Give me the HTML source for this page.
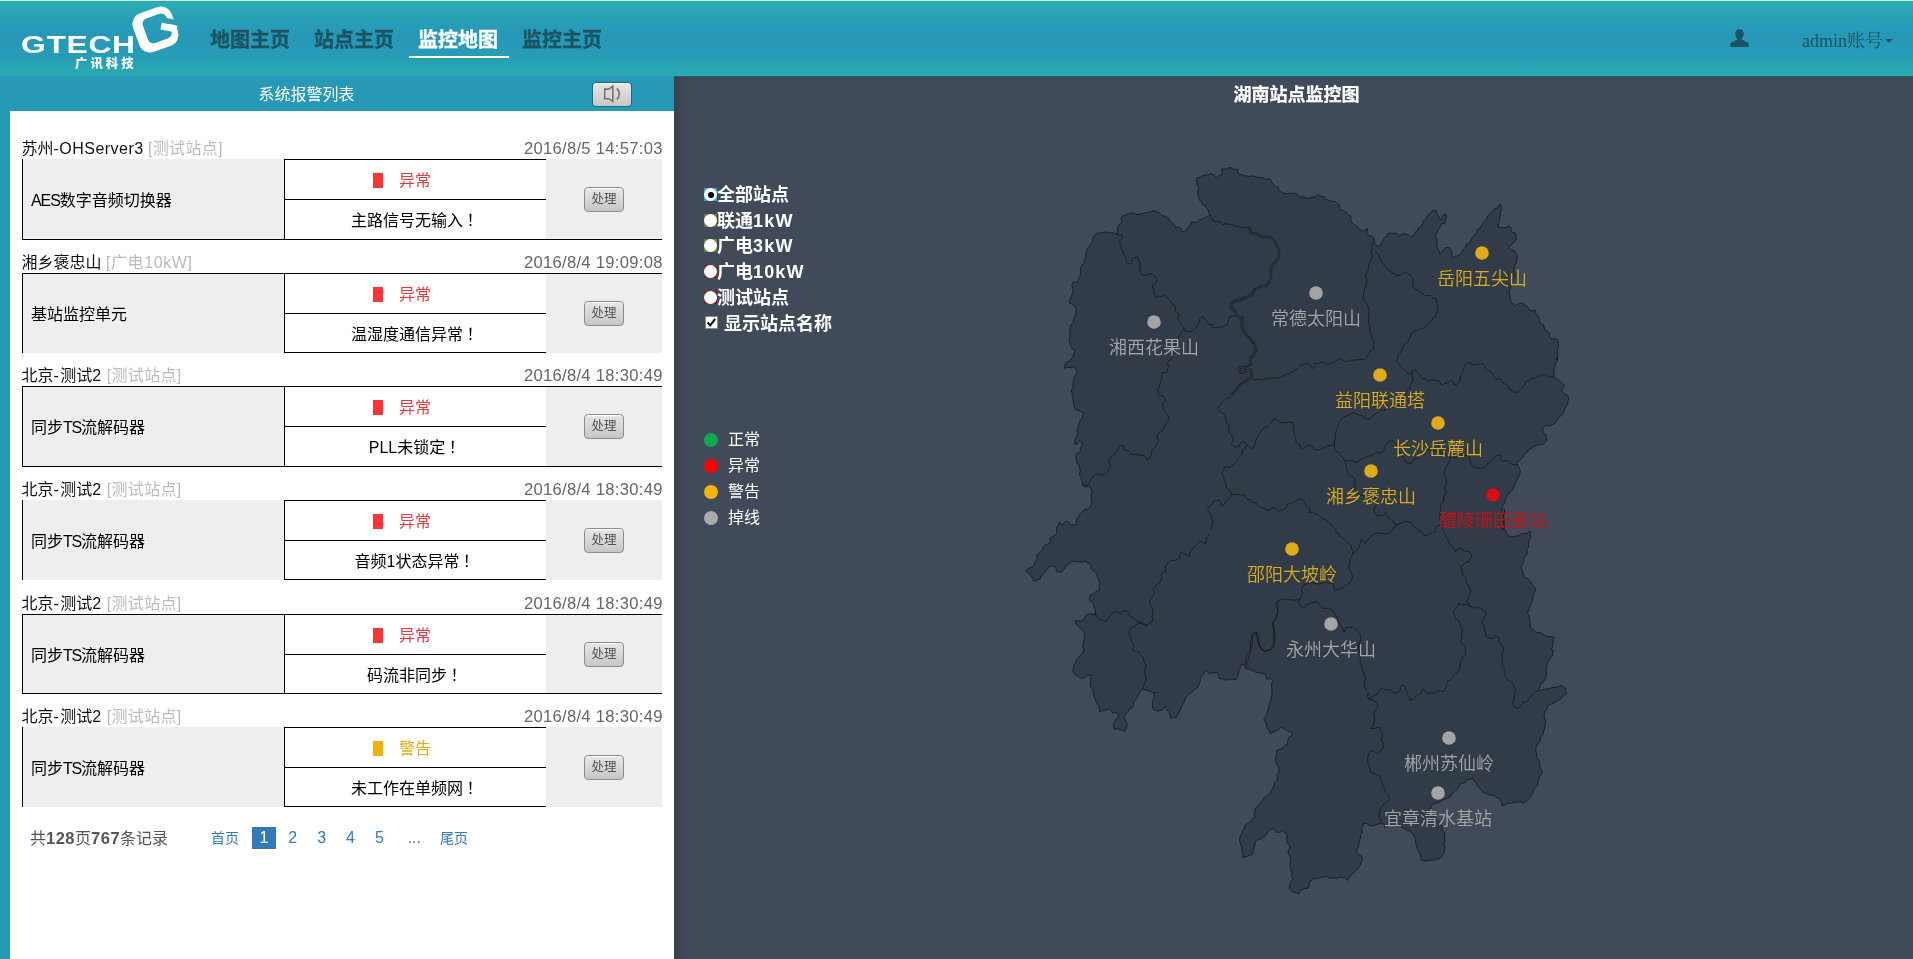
<!DOCTYPE html>
<html lang="zh-CN">
<head>
<meta charset="utf-8">
<title>湖南站点监控图</title>
<style>
*{box-sizing:border-box;margin:0;padding:0}
html,body{width:1913px;height:959px;overflow:hidden;background:#404a59}
body{position:relative;font-family:"Liberation Sans","Noto Sans CJK SC",sans-serif;font-size:16px;color:#000}
#hdr,#left,#right,#hdr *,#left *,#right *{position:absolute}
#hdr,#left,#right{will-change:transform}
#hdr{left:0;top:0;width:1913px;height:76px;background:linear-gradient(180deg,#2cb8aa 0%,#2aadb0 6%,#299fb5 22%,#2798b8 45%,#279bb7 70%,#28a6b3 92%,#29aab2 100%)}
#hdr .nav{top:25.3px;height:30px;width:100px;text-align:center;font-weight:bold;font-size:20px;line-height:30px;color:#1a5462;white-space:nowrap;-webkit-text-stroke:0.35px currentColor}
#hdr .nav.on{color:#fff}
#hdr .ul{left:409px;top:56px;width:100px;height:2px;background:#fff}
#hdr .user{left:1802px;top:28px;height:26px;line-height:26px;font-family:"Liberation Serif","Noto Serif CJK SC",serif;font-size:18px;color:#1a5462;white-space:nowrap}
#hdr .caret{left:1885px;top:39px;width:0;height:0;border-left:4px solid transparent;border-right:4px solid transparent;border-top:4px solid #1a5462}
#left{left:0;top:76px;width:674px;height:883px;background:#2799b6}
#left .white{left:10px;top:35px;width:664px;height:848px;background:#fff}
#left .ttl{left:258.5px;top:7.4px;height:24px;line-height:24px;font-size:16px;color:#fff;white-space:nowrap}
.btn{background:linear-gradient(180deg,#efefef 0%,#e2e2e2 12%,#d6d6d6 55%,#c6c6c6 100%);border:1px solid #8c8c8c;border-radius:4px;color:#555;font-size:12.5px;text-align:center;white-space:nowrap;box-shadow:inset 0 1px 0 rgba(255,255,255,.75)}
#left .item{left:22px;width:640px;height:100px}
#left .nm{left:-0.5px;top:1.5px;height:22px;line-height:22px;font-size:16px;white-space:nowrap;color:#111}
#left .nm i{position:static;font-style:normal;color:#bbb}
#left .dt{right:-0.8px;top:2.2px;height:22px;line-height:22px;font-size:16.6px;letter-spacing:0.3px;white-space:nowrap;color:#666;text-align:right}
#left .g1{left:0;width:262px;background:#eee}
#left .g2{left:524px;width:116px;background:#eee}
#left .ln{background:#000}
#left .dev{left:9px;height:24px;line-height:24px;font-size:16px;white-space:nowrap;color:#000}
#left .st{left:377px;height:24px;line-height:24px;font-size:16px;white-space:nowrap}
#left .msg{left:262px;width:262px;text-align:center;height:24px;line-height:24px;font-size:16px;white-space:nowrap;color:#000}
#left .sq{width:10px;height:15px}
#left .pg{top:750px;height:24px;line-height:24px;white-space:nowrap;color:#337ab7;font-size:16px}
#right{left:674px;top:76px;width:1239px;height:883px;background:#404a59}
#right .sh{left:0;top:0;width:13px;height:883px;background:linear-gradient(90deg,rgba(0,0,0,.13),rgba(0,0,0,0))}
#right .mt{-webkit-text-stroke:0.25px #fff;left:0;top:6.6px;width:1245px;text-align:center;height:24px;line-height:24px;font-size:18px;font-weight:bold;color:#fff;white-space:nowrap}
#right .rl{left:43px;height:26px;line-height:26px;font-size:18px;font-weight:bold;color:#fff;white-space:nowrap}
#right .rb{left:30px;width:13px;height:13px}
#right .rb b{left:0;top:0;width:13px;height:13px;border-radius:50%;background:#fff}
#right .lg{left:54px;height:24px;line-height:24px;font-size:16px;color:#fff;white-space:nowrap}
#right .ld{left:30px;width:14px;height:14px;border-radius:50%}
#map{left:0;top:0;width:1239px;height:883px}
#map text{font-family:"Liberation Sans","Noto Sans CJK SC",sans-serif;font-size:18px;font-weight:350;text-anchor:middle}
</style>
</head>
<body>
<div id="hdr">
<div style="left:0;top:0;width:1913px;height:1px;background:#c4f0f0"></div><div style="left:0;top:1px;width:1913px;height:1px;background:rgba(60,110,110,.28)"></div>
<div class="lg-t" style="left:21px;top:32.3px;height:26px;line-height:26px;font-size:23.4px;font-weight:bold;color:#fff;white-space:nowrap;transform-origin:0 50%;transform:scaleX(1.36);letter-spacing:0.5px">GTECH</div>
<div class="lg-c" style="left:75px;top:54.8px;height:18px;line-height:18px;font-size:12.4px;font-weight:900;color:#fff;white-space:nowrap;letter-spacing:3px">广讯科技</div>
<div class="lg-g" style="left:125px;top:0.6px;width:60px;height:60px;clip-path:polygon(0 0,60px 0,60px 20.9px,37.5px 16.65px,37.5px 22.2px,60px 26.4px,60px 60px,0 60px)">
  <div style="left:10.2px;top:8.3px;width:41px;height:41px;border-radius:11.5px;overflow:hidden;transform:rotate(-20deg)"><div style="left:10.3px;top:7.1px;width:25.1px;height:25.5px;border-radius:5.5px;box-shadow:0 0 0 30px #fff"></div></div>
  <div style="left:36px;top:23.4px;width:15.5px;height:7.2px;background:#fff;transform:rotate(11.5deg)"></div>
</div>

<div class="nav" style="left:200px">地图主页</div>
<div class="nav" style="left:304px">站点主页</div>
<div class="nav on" style="left:408px">监控地图</div>
<div class="nav" style="left:512px">监控主页</div>
<div class="ul"></div>
<svg style="left:1730px;top:29px" width="19" height="18" viewBox="0 0 19 18"><path d="M9.5 0.3c2.6 0 4.3 1.9 4.3 4.6 0 1.7-.7 3.4-1.8 4.4-.3.3-.3 1.2.2 1.5l4.6 2.1c1.2.6 1.9 1.4 1.9 2.6V18H.3v-2.5c0-1.2.7-2 1.9-2.6l4.6-2.1c.5-.3.5-1.2.2-1.5C5.900 8.300 5.200 6.600 5.200 4.900 5.200 2.200 6.900.3 9.500.3z" fill="#1a5462"/></svg>
<div class="user">admin账号</div><div class="caret"></div>
</div>
<div id="left">
<div class="ttl">系统报警列表</div>
<div class="btn" style="left:592px;top:6.3px;width:40px;height:24.3px;border-color:#1d6b80"></div>
<svg style="left:600px;top:8px" width="26" height="20" viewBox="600 84 26 20"><path d="M604.7 89.1H608.6L612.8 86.3V101.5L608.6 98.7H604.7Z" fill="none" stroke="#747474" stroke-width="1.6" stroke-linejoin="miter"/><path d="M616.9 88.4Q621.6 94 616.9 99.6" fill="none" stroke="#747474" stroke-width="1.7"/></svg>
<div class="white"></div>
<div class="item" style="top:60px;height:104px">
<div class="nm">苏州<span style="position:static;letter-spacing:0.47px">-OHServer3</span> <i><span style="position:static;letter-spacing:0.3px">[测试站点]</span></i></div><div class="dt">2016/8/5 14:57:03</div>
<div class="g1" style="top:23px;height:81px"></div>
<div class="g2" style="top:23px;height:81px"></div>
<div class="a" style="left:262px;top:23px;width:262px;height:81px;background:#fff"></div>
<div class="ln" style="left:0;top:23px;width:1px;height:81px"></div>
<div class="ln" style="left:262px;top:23px;width:1px;height:81px"></div>
<div class="ln" style="left:262px;top:23px;width:262px;height:1px"></div>
<div class="ln" style="left:0;top:103px;width:640px;height:1px"></div>
<div class="ln" style="left:262px;top:63px;width:262px;height:1px"></div>
<div class="dev" style="top:52.8px"><span style="position:static;letter-spacing:-1.1px">AES</span>数字音频切换器</div>
<div class="sq" style="left:351px;top:36.5px;background:#fb3535"></div>
<div class="st" style="top:33.3px;color:#e8383d">异常</div>
<div class="msg" style="top:73px">主路信号无输入<span style="position:relative;left:3.4px">！</span></div>
<div class="btn" style="left:562px;top:51px;width:40px;height:25px;line-height:22.5px">处理</div>
</div>
<div class="item" style="top:174px;height:103px">
<div class="nm">湘乡褒忠山 <i><span style="position:static;letter-spacing:0.6px">[广电10kW]</span></i></div><div class="dt">2016/8/4 19:09:08</div>
<div class="g1" style="top:23px;height:80px"></div>
<div class="g2" style="top:24px;height:79px"></div>
<div class="a" style="left:262px;top:23px;width:262px;height:80px;background:#fff"></div>
<div class="ln" style="left:0;top:23px;width:1px;height:80px"></div>
<div class="ln" style="left:262px;top:23px;width:1px;height:80px"></div>
<div class="ln" style="left:0;top:23px;width:640px;height:1px"></div>
<div class="ln" style="left:262px;top:102px;width:262px;height:1px"></div>
<div class="ln" style="left:262px;top:63px;width:262px;height:1px"></div>
<div class="dev" style="top:52.8px">基站监控单元</div>
<div class="sq" style="left:351px;top:36.5px;background:#fb3535"></div>
<div class="st" style="top:33.3px;color:#e8383d">异常</div>
<div class="msg" style="top:73px">温湿度通信异常<span style="position:relative;left:3.4px">！</span></div>
<div class="btn" style="left:562px;top:51px;width:40px;height:25px;line-height:22.5px">处理</div>
</div>
<div class="item" style="top:287px;height:104px">
<div class="nm">北京<span style="position:static;letter-spacing:1.3px">-</span>测试<span style="position:static;letter-spacing:1.3px">2</span> <i><span style="position:static;letter-spacing:0.3px">[测试站点]</span></i></div><div class="dt">2016/8/4 18:30:49</div>
<div class="g1" style="top:23px;height:81px"></div>
<div class="g2" style="top:24px;height:80px"></div>
<div class="a" style="left:262px;top:23px;width:262px;height:81px;background:#fff"></div>
<div class="ln" style="left:0;top:23px;width:1px;height:81px"></div>
<div class="ln" style="left:262px;top:23px;width:1px;height:81px"></div>
<div class="ln" style="left:0;top:23px;width:640px;height:1px"></div>
<div class="ln" style="left:0;top:103px;width:640px;height:1px"></div>
<div class="ln" style="left:262px;top:63px;width:262px;height:1px"></div>
<div class="dev" style="top:52.8px">同步<span style="position:static;letter-spacing:-1.2px">TS</span>流解码器</div>
<div class="sq" style="left:351px;top:36.5px;background:#fb3535"></div>
<div class="st" style="top:33.3px;color:#e8383d">异常</div>
<div class="msg" style="top:73px">PLL未锁定<span style="position:relative;left:3.4px">！</span></div>
<div class="btn" style="left:562px;top:51px;width:40px;height:25px;line-height:22.5px">处理</div>
</div>
<div class="item" style="top:401px;height:103px">
<div class="nm">北京<span style="position:static;letter-spacing:1.3px">-</span>测试<span style="position:static;letter-spacing:1.3px">2</span> <i><span style="position:static;letter-spacing:0.3px">[测试站点]</span></i></div><div class="dt">2016/8/4 18:30:49</div>
<div class="g1" style="top:23px;height:80px"></div>
<div class="g2" style="top:23px;height:80px"></div>
<div class="a" style="left:262px;top:23px;width:262px;height:80px;background:#fff"></div>
<div class="ln" style="left:0;top:23px;width:1px;height:80px"></div>
<div class="ln" style="left:262px;top:23px;width:1px;height:80px"></div>
<div class="ln" style="left:262px;top:23px;width:262px;height:1px"></div>
<div class="ln" style="left:262px;top:102px;width:262px;height:1px"></div>
<div class="ln" style="left:262px;top:63px;width:262px;height:1px"></div>
<div class="dev" style="top:52.8px">同步<span style="position:static;letter-spacing:-1.2px">TS</span>流解码器</div>
<div class="sq" style="left:351px;top:36.5px;background:#fb3535"></div>
<div class="st" style="top:33.3px;color:#e8383d">异常</div>
<div class="msg" style="top:73px">音频1状态异常<span style="position:relative;left:3.4px">！</span></div>
<div class="btn" style="left:562px;top:51px;width:40px;height:25px;line-height:22.5px">处理</div>
</div>
<div class="item" style="top:515px;height:103px">
<div class="nm">北京<span style="position:static;letter-spacing:1.3px">-</span>测试<span style="position:static;letter-spacing:1.3px">2</span> <i><span style="position:static;letter-spacing:0.3px">[测试站点]</span></i></div><div class="dt">2016/8/4 18:30:49</div>
<div class="g1" style="top:23px;height:80px"></div>
<div class="g2" style="top:24px;height:79px"></div>
<div class="a" style="left:262px;top:23px;width:262px;height:80px;background:#fff"></div>
<div class="ln" style="left:0;top:23px;width:1px;height:80px"></div>
<div class="ln" style="left:262px;top:23px;width:1px;height:80px"></div>
<div class="ln" style="left:0;top:23px;width:640px;height:1px"></div>
<div class="ln" style="left:0;top:102px;width:640px;height:1px"></div>
<div class="ln" style="left:262px;top:63px;width:262px;height:1px"></div>
<div class="dev" style="top:52.8px">同步<span style="position:static;letter-spacing:-1.2px">TS</span>流解码器</div>
<div class="sq" style="left:351px;top:36.5px;background:#fb3535"></div>
<div class="st" style="top:33.3px;color:#e8383d">异常</div>
<div class="msg" style="top:73px">码流非同步<span style="position:relative;left:3.4px">！</span></div>
<div class="btn" style="left:562px;top:51px;width:40px;height:25px;line-height:22.5px">处理</div>
</div>
<div class="item" style="top:628px;height:103px">
<div class="nm">北京<span style="position:static;letter-spacing:1.3px">-</span>测试<span style="position:static;letter-spacing:1.3px">2</span> <i><span style="position:static;letter-spacing:0.3px">[测试站点]</span></i></div><div class="dt">2016/8/4 18:30:49</div>
<div class="g1" style="top:23px;height:80px"></div>
<div class="g2" style="top:23px;height:80px"></div>
<div class="a" style="left:262px;top:23px;width:262px;height:80px;background:#fff"></div>
<div class="ln" style="left:0;top:23px;width:1px;height:80px"></div>
<div class="ln" style="left:262px;top:23px;width:1px;height:80px"></div>
<div class="ln" style="left:262px;top:23px;width:262px;height:1px"></div>
<div class="ln" style="left:262px;top:102px;width:262px;height:1px"></div>
<div class="ln" style="left:262px;top:63px;width:262px;height:1px"></div>
<div class="dev" style="top:52.8px">同步<span style="position:static;letter-spacing:-1.2px">TS</span>流解码器</div>
<div class="sq" style="left:351px;top:36.5px;background:#f0b20c"></div>
<div class="st" style="top:33.3px;color:#e2ae12">警告</div>
<div class="msg" style="top:73px">未工作在单频网<span style="position:relative;left:3.4px">！</span></div>
<div class="btn" style="left:562px;top:51px;width:40px;height:25px;line-height:22.5px">处理</div>
</div>
<div class="pg" style="left:30px;color:#555">共<b style="position:static;letter-spacing:0.5px;font-size:16.5px">128</b>页<b style="position:static;letter-spacing:0.5px;font-size:16.5px">767</b>条记录</div>
<div class="pg" style="left:211px;font-size:14px">首页</div>
<div class="pg" style="left:252px;top:751px;width:24px;height:22px;line-height:22px;background:#337ab7;color:#fff;text-align:center">1</div>
<div class="pg" style="left:280.8px;width:24px;text-align:center">2</div>
<div class="pg" style="left:309.7px;width:24px;text-align:center">3</div>
<div class="pg" style="left:338.5px;width:24px;text-align:center">4</div>
<div class="pg" style="left:367.4px;width:24px;text-align:center">5</div>
<div class="pg" style="left:402.3px;width:24px;text-align:center">...</div>
<div class="pg" style="left:440px;font-size:14px">尾页</div>
</div>
<div id="right">
<svg id="map" width="1239" height="883" viewBox="674 76 1239 883">
<path d="M1095.5,700 1094.4,697.4 1093.4,694.8 1093.4,691.9 1092.7,689 1090.5,686.6 1090.3,683.5 1090.7,680.7 1090.7,677.9 1091.3,675.2 1087.2,675.2 1084.5,677.6 1080.9,678.3 1078.8,676.7 1076.7,675.2 1073.9,673.2 1072.6,670 1073.5,667.5 1073.8,664.8 1075.7,662.7 1076.3,659.8 1078.4,657.8 1079.9,655.4 1082.5,653.2 1084,650.2 1082.7,647.2 1083,643.9 1083.5,640.6 1085.1,637.6 1084.3,634.7 1083.9,631.7 1081.9,629.3 1079.4,627.1 1076.7,625.1 1074.7,621 1077.8,620.8 1080.9,621 1083.7,619.6 1085.1,616.8 1087.2,614.4 1090.3,613.7 1092.9,614.5 1095.5,613.7 1096.5,616.8 1095.7,614.4 1095.1,612 1095.5,609.5 1093.7,607.2 1093.4,604.3 1091,602 1089.2,599.1 1090.3,594.9 1093.3,593.9 1095.5,591.8 1099.7,589.7 1099,586.5 1099.7,583.4 1098.8,580.2 1097.6,577.2 1096.8,574.4 1095.5,571.9 1093.2,570.6 1091.3,568.8 1090.9,566.2 1090.3,563.6 1087.3,563.1 1085.1,560.9 1082,562.2 1078.8,561.5 1076.4,562.1 1073.9,561.1 1071.5,561.5 1069,563.7 1066.3,565.7 1065.2,568 1063.3,569.7 1062.1,571.9 1059.5,572 1056.9,571.9 1056,569.4 1055.9,566.7 1051.7,565.7 1049.2,566.9 1047.3,568.8 1045.5,570.9 1043.8,573.4 1041.3,575.1 1040.2,579.2 1037.1,579.9 1034,580.9 1032.5,578.5 1030.9,576.1 1029.7,573.8 1027.7,572.3 1025.6,570.9 1027.4,569 1029.8,567.8 1032.5,567.1 1034,564.7 1034.9,562.1 1037.1,560.5 1036.9,557.4 1037.1,554.2 1040.1,552.6 1042.3,550.1 1043.2,547.1 1045.5,544.8 1048.1,543.8 1050.7,542.8 1049.7,540.1 1050.7,537.5 1053.5,536.3 1055.9,534.4 1056.8,532 1056.7,529.6 1056.9,527.1 1058.7,524.8 1059,521.9 1062.1,525 1064.5,522.6 1067.4,520.9 1069.1,523.3 1071.5,525 1075.7,525 1076.4,521.9 1076.7,518.8 1078.7,516.3 1080.5,513.5 1082.5,511.4 1084.7,509.4 1087.6,509 1089.9,507.3 1091.8,504.4 1091.9,501 1091.3,497.9 1090.9,494.8 1091.9,490.6 1090.6,488.3 1088.8,486.4 1085.5,486.9 1082.6,485.4 1082.5,482.7 1081.5,480.2 1080.8,476.9 1079.4,473.9 1080.5,470.8 1079.4,467.6 1079,464.9 1076.9,462.9 1076.3,460.3 1076,457.2 1076.3,454.1 1078.6,452.8 1080.5,451 1080.2,448.3 1081.8,446.1 1082.6,443.7 1079.4,440.5 1077.9,443.1 1075.3,444.7 1074.8,441.8 1075,439.1 1076.3,436.4 1077.6,433.7 1076.9,430.6 1078.4,428 1078.6,425.1 1079.6,422.4 1080.5,419.7 1082.6,418.1 1082.5,415 1084.7,413.4 1080.5,411.3 1077.9,410.4 1075.3,409.2 1074.4,406.1 1073.2,403 1073.5,399.7 1072.1,396.7 1072.3,393.5 1071.1,390.5 1072.9,387.6 1073.2,384.2 1073.2,381 1074.2,378 1075.6,375.3 1077.4,372.8 1076.1,370.3 1075.3,367.5 1072.7,366.7 1070.1,367.5 1067.2,367.1 1064.8,368.6 1064.8,364.4 1067.1,362.2 1070.1,361.3 1071.1,358.8 1073.2,357.1 1073.7,353.8 1075.3,350.9 1072.8,349.2 1071.1,346.7 1070,343.6 1069,340.4 1069.7,337.3 1070.1,334.2 1069.6,330 1070.3,327.3 1071,324.7 1073.2,322.7 1073.8,320 1074.5,317.4 1075.7,314.9 1076.3,312.2 1076.4,308.8 1074.6,306 1072,304.1 1069,302.9 1070.1,299.8 1071.1,296.6 1072,294.2 1072.9,291.8 1073.2,289.3 1071.7,285.1 1072.9,282.6 1076.2,282.1 1077.9,280.1 1079.4,277.8 1080.6,274.8 1080.8,271.6 1080.5,268.4 1081.7,266.2 1083.1,264.1 1084.7,262.2 1084.3,259.4 1086,257.1 1085.3,254.2 1086.7,251.8 1087.2,249.2 1088.8,247.3 1090,245.1 1091.9,243.4 1092.6,240.9 1093.1,238.3 1094,235.9 1096.1,234 1099.1,232.7 1102.4,233 1104.9,231.9 1107.6,232.6 1110.4,232.8 1113.3,232.5 1115.9,234 1117.4,231.8 1117.5,229.2 1118,226.7 1119.6,224.1 1122.2,222.6 1121.1,220.1 1121.1,217.4 1123.6,215.7 1126.4,214.6 1128.8,213.8 1131.1,212.9 1133.7,213.2 1136.1,214.2 1138.5,214.7 1141,213.8 1143.8,213.2 1146.5,212.6 1149.3,212.1 1151.7,211 1154.1,210.8 1156.6,211.5 1159.4,213.1 1161.8,215.3 1166,216.7 1168.4,218.3 1169.6,221.2 1172.2,222.6 1174.4,224.8 1175.4,227.8 1179.5,227.2 1181.5,229.1 1181.6,231.9 1184.7,231.2 1186.8,228.8 1190,225.7 1191.4,221.5 1193.8,222.1 1196.2,222.6 1198.4,220.3 1201.4,219.4 1204.6,217.9 1207.7,216.3 1210.8,215.3 1208.6,213.2 1208.2,210.1 1206.5,208.3 1205.4,205.8 1202.9,204.8 1202,202.3 1199.8,200.7 1199.5,198.1 1197.9,196 1197.7,193.4 1198,190.2 1198.8,187.1 1197.1,184.8 1196.7,181.9 1197.1,177.7 1200.2,177.2 1202.9,175.6 1205.7,175 1208.6,174.9 1211.3,173.6 1214.1,175.4 1216.5,177.7 1218.8,175.6 1221.7,174.6 1222.4,171.7 1221.7,168.8 1224.7,169.4 1227.4,168.6 1230.1,167.3 1232.3,168.6 1234.8,169.4 1237.4,169.4 1237.9,172.2 1239.4,174.6 1241.9,174.5 1244.1,175.7 1246.5,175.9 1248.8,176.7 1251.5,175.9 1254.1,176.2 1256.6,177 1259.2,177.7 1261.9,177.4 1264.4,178.7 1267,179.5 1269.7,178.8 1271.3,181.3 1272.8,184 1274.9,186.4 1278,187.1 1279.3,190.4 1282.2,192.3 1285.1,193.8 1288.4,193.4 1291.6,193.1 1294.7,193.4 1297.7,194.7 1299.9,197.1 1302.5,197 1304.9,197.4 1307.2,198.6 1310.2,197.4 1313.5,197.5 1315.7,196.2 1317.6,194.4 1320.5,196.3 1323.9,196.5 1326,199.2 1329.1,200.7 1332.3,201.2 1335.4,201.7 1337.2,203.5 1339.5,204.8 1339.4,207.6 1340.6,210.1 1344.1,210.8 1346.8,213.2 1348.7,215 1351,216.3 1350.7,219.6 1352.1,222.6 1354.3,225.1 1357.3,226.7 1359,228.9 1361.5,230.1 1363.5,231.9 1365.2,229.8 1367.7,228.8 1366.7,233 1368.8,235.3 1371.8,236.2 1374,238.2 1373.9,240.9 1375,243.4 1375.6,245.5 1378.4,246 1380.9,244.5 1382.1,242 1383.4,239.5 1385,237.2 1387.4,235.7 1388.2,233 1391.3,233.5 1394.4,233 1397.4,233.9 1399.6,236.1 1401.9,234.3 1404.8,234 1408.3,234.9 1411.1,237.2 1413.9,235.1 1415.3,231.9 1417.5,230.6 1418.2,227.9 1420.5,226.7 1422.7,223.9 1423.6,220.5 1426.5,218.6 1427.8,215.3 1430.1,213.4 1431.9,211.1 1436.1,210.1 1437.2,214.2 1439,217.2 1440.3,220.5 1441.9,218 1443.4,215.3 1445.9,214.2 1446.5,217.4 1445.5,220.5 1444.6,223.3 1441.2,224 1440.3,226.7 1438.6,229 1437.4,231.5 1436.1,234 1435.5,237.2 1437,240.2 1437.2,243.4 1436.9,246.2 1437.5,248.7 1439.3,251.1 1439.2,253.8 1442.4,251.8 1443.5,249.4 1445.5,247.6 1449.7,247.6 1451.2,250.6 1451.8,253.8 1452.8,258 1455.2,256.4 1458,255.9 1460.2,254 1462.2,251.8 1463.3,249.4 1465.2,247.5 1466.2,245 1468.4,243.4 1470.5,241.8 1470.9,239.1 1472.5,237.1 1474.2,235.2 1476.1,233.5 1476.8,230.9 1478.3,228.7 1480.8,227.3 1481.8,224.7 1483.5,222.6 1485.1,220.5 1486.8,218.7 1487.7,216 1490,214.8 1491.3,212.5 1493.5,211.1 1494.6,208.6 1497.6,208.1 1498.5,205.4 1500.8,204.2 1501.2,207.1 1501.4,210.1 1500.3,212.8 1500.1,215.6 1499.7,218.4 1499.4,221.3 1498.3,223.9 1497.6,226.7 1500.7,227.4 1503.9,227.8 1506.7,227.3 1509.1,225.7 1511,228.5 1511.2,231.9 1515.4,233 1515.8,236.1 1516.4,239.2 1514.7,241.7 1512.2,243.4 1510.5,245.8 1508.1,247.6 1510.9,249.7 1514.3,250.7 1515.9,253.3 1517.5,255.9 1516.8,259 1516.4,262.2 1514.8,265.1 1514.3,268.4 1513.8,271.3 1515.2,274 1515.4,276.8 1513.8,279.5 1512.6,282.3 1511.2,285.1 1510.5,287.9 1509.4,290.6 1509.1,293.5 1509.9,296.2 1510.4,299.1 1511.2,301.8 1512.8,303.9 1514.3,306 1518.5,303.9 1522.7,302.9 1524.2,305.2 1526.8,306 1528.1,308.4 1530,310.2 1532.6,311 1535.2,310.2 1535.9,313.7 1538.3,316.4 1539.4,319.5 1539.4,322.7 1543.5,324.8 1544.4,327.9 1545.6,331 1549.8,333.1 1549.3,335.9 1550.8,338.3 1553.4,339 1556,338.3 1557.8,340.6 1558.1,343.5 1558.6,346.4 1557.6,349.1 1557.1,351.9 1557.7,354.7 1556.9,357.4 1556,360 1557.5,357.1 1557.7,360.1 1555.7,362.6 1555.4,365.5 1554.4,368.2 1553.8,370.9 1554.3,373.8 1553.3,376.9 1556.3,377.9 1558.5,380.1 1561.6,383.2 1564.8,385.3 1562.8,387.7 1561.6,390.5 1563.5,392.8 1565.8,394.7 1568,396.3 1568.9,398.8 1567.6,401.8 1567.9,405.1 1565.5,406.5 1564.8,409.2 1563.8,412.6 1561.6,415.5 1558.8,416.9 1557.5,419.7 1556.1,421.9 1554.3,423.8 1551.7,424.9 1549.1,425.9 1546.3,425.4 1543.9,427 1542.7,429.5 1542.9,432.2 1545,433.9 1546,436.4 1547,440.5 1543.9,443.7 1541.3,444.3 1538.7,444.7 1536.1,445.7 1533.5,446.8 1531.1,448.7 1528.3,449.9 1526.7,452.5 1524.1,454.1 1522.9,456.9 1521,459.3 1518.6,461.1 1516.8,463.5 1518.9,467.6 1520.4,470.6 1519.9,473.9 1518.2,477 1516.8,480.2 1515.4,483.4 1513.7,486.4 1513.2,489.1 1511.2,490.8 1509.5,492.7 1507.9,494.6 1506.7,496.8 1505.3,498.9 1505.2,502.4 1503.2,505.2 1501.6,508.1 1502.2,511.4 1502.1,514.6 1503.2,517.7 1502.7,521 1504.3,524 1504.1,527.3 1502.2,530 1501.9,527.5 1501.6,525.1 1503.4,522.8 1502.5,520.3 1502.3,517.9 1503.2,515.5 1504.4,513.2 1504.4,510.8 1503.9,508.3 1504.5,510.8 1504.8,513.3 1503.2,515.9 1504.1,518.4 1504.3,520.9 1503.7,523.6 1504.9,526.5 1503.9,529.2 1506,531.4 1506.4,534.4 1509.3,536.1 1512.6,537.1 1515.7,536.1 1518.9,535.5 1521.7,533.6 1525.1,533.4 1528.1,533 1530.3,530.9 1530.4,534.2 1531,537.5 1529,540.4 1528.3,543.8 1528.8,546.7 1526.8,549.2 1527.2,552.1 1527,554.9 1524.4,556.7 1524.1,559.4 1523.2,561.9 1522.4,564.4 1521,566.7 1521.9,569.3 1523,571.9 1523.2,574.9 1525.1,577.2 1528,578.8 1530.3,581.3 1532.4,585.5 1535.6,588.6 1535.3,591.5 1533.5,593.8 1532.9,596.9 1532.4,600.1 1531.4,603.5 1529.3,606.4 1529.1,609.8 1527.2,612.6 1528.6,614.8 1529.6,617.2 1529.3,619.9 1530.3,622.2 1530.4,624.7 1530.3,627.2 1532.7,629 1534.5,631.4 1536.8,632.6 1539.5,632.4 1541.8,633.5 1544.4,635.1 1547,636.6 1550.6,636.4 1553.9,637.6 1553.4,640.8 1552.2,643.9 1552.7,646.7 1551.2,649.1 1553.3,650.2 1552.8,653.2 1552.2,656.1 1550.2,658.5 1548.1,661.4 1547,664.8 1546.4,667.9 1546,671 1546.7,673.6 1546,676.3 1545,678.9 1543.9,681.5 1541.1,683.5 1539.7,686.7 1538.8,689.3 1536.6,690.9 1539.3,691 1541.8,689.8 1544.9,689.2 1548.1,688.8 1551.2,687.9 1554.3,687.1 1556.9,687.3 1559.1,685.9 1561.6,685.6 1563.7,687.2 1565.8,688.8 1565.7,691.4 1566.4,694 1563.3,695.3 1561.6,698.2 1559.2,700 1556.4,701.3 1553.3,703.4 1550.2,704.4 1548,706.1 1547,708.6 1545,711.5 1543.9,714.8 1544.5,718 1545.6,721.1 1545.2,724.3 1544.8,727.4 1543.9,730.5 1543.2,734 1540.8,736.7 1540.5,739.5 1539.5,741.9 1537.6,744 1536.1,747 1535.6,750.3 1536.5,752.7 1537,755.1 1536.6,757.6 1539,760.3 1539.7,763.8 1540,767.2 1541.8,770.1 1541.8,774.3 1539.5,776.5 1538.7,779.5 1537.8,782.5 1537.6,785.7 1535.8,787.7 1533.5,788.9 1533,792.2 1531.4,795.1 1529.7,798 1527.2,800.3 1525.2,802 1523,803.5 1518.9,801.4 1516.4,802.6 1513.7,802.4 1510.6,803.1 1507.4,803.5 1505,805 1502.2,805.6 1501.1,801.4 1499.1,798.5 1495.9,797.2 1493.1,795.2 1489.7,795.1 1487.1,794 1484.5,793 1482,791.4 1480.3,788.9 1477.2,785.7 1476.4,783 1474,781.6 1473,778.4 1470.5,779.4 1467.8,779.5 1464.7,782.6 1460.5,783.7 1459.2,786.5 1457.4,788.9 1454.2,792 1451.1,795.1 1449.7,797.6 1446.9,798.3 1442.8,800.3 1438.6,802.4 1434.4,803.5 1431.3,805.6 1430.9,808.7 1431.4,811.3 1431.3,813.9 1433.4,816 1435.5,818.1 1437.5,820.2 1439.6,822.2 1441.7,826.4 1442.8,830.6 1444.4,833 1444.8,835.8 1444.5,838.2 1445.2,840.8 1443.8,843.1 1444.8,846.2 1444.8,849.4 1444.6,852.2 1442.9,854.4 1441.7,856.7 1439.5,858.6 1436.5,858.7 1434.1,860.3 1431.3,859.8 1428.8,860.7 1426.1,860.8 1421.9,860.8 1420.8,858.3 1420.9,855.6 1419.5,852.4 1417.7,849.4 1416.7,846.2 1415.6,843.1 1415.6,839.9 1414.6,836.8 1413.3,834.5 1411.5,832.7 1409.1,830.7 1406.3,829.5 1403.5,828.3 1400.7,826.5 1397.3,826.2 1394.1,825.9 1391,825.1 1388,826.5 1384.8,827.2 1384,824.5 1381.6,823 1378.5,824.1 1374.3,825.1 1371.7,825.9 1369.1,825.1 1366.7,823.6 1363.9,823 1362.6,826.1 1361.8,829.3 1362.5,832.2 1360.4,834.7 1360.8,837.6 1359.3,840.2 1359.1,843.1 1358.7,846 1357.2,848.9 1356.6,852.2 1358.8,854.8 1361.8,856.4 1362.3,859.3 1361.1,862 1360.8,864.8 1359.2,866.8 1357.6,868.9 1355,870.5 1353.5,873.1 1351.4,874.5 1349.8,876.3 1348.6,878.5 1347.2,880.4 1345,878.1 1342,877.3 1339.3,877.4 1336.8,878.3 1333.7,877.9 1330.5,878.3 1326.4,876.2 1323.4,877.3 1320.1,877.3 1317.1,878.8 1313.8,878.3 1312.2,880.5 1309.7,881.4 1309.3,883.9 1309.1,886.5 1307.6,888.7 1304.3,888.5 1301.3,889.8 1299.6,891.8 1298.2,894 1295.7,892.7 1293,891.9 1291.1,890.1 1288.8,888.7 1289.7,886.2 1289.9,883.5 1291.4,880.9 1293,878.3 1291.2,876.2 1292.2,873.3 1290.9,871 1290.9,867.8 1289.9,864.8 1290.4,861.7 1290.9,858.5 1289.4,855.3 1287.8,852.2 1289.2,849.2 1289.9,846 1287.4,843.3 1286.7,839.7 1287.2,836.6 1286.7,833.5 1284.3,832.3 1282.6,830.3 1280.4,832.2 1277.4,832.4 1274.9,830.7 1273.2,828.3 1271.1,829.3 1268.6,831 1266.9,833.5 1265.6,835.7 1263.1,836.6 1261.7,838.7 1258.1,839.3 1255.5,841.8 1254.8,844.6 1254.4,847.5 1253.4,850.2 1252.3,854.3 1249.7,855.4 1247.1,856.4 1242.9,857.5 1243,855 1242.8,852.6 1241.9,850.2 1241.4,847.3 1240.8,844.5 1239.8,841.8 1239.6,838.8 1240.4,836.1 1241.9,833.5 1242.4,830.5 1244.5,828.1 1245,825.1 1246.9,823.4 1249.3,822.5 1251.3,821 1252.6,818.1 1255.5,816.8 1254.5,814 1255,811.2 1255.5,808.4 1257.5,806.6 1259.3,804.5 1260.7,802.2 1262.6,800.3 1263.8,798 1265.6,796.2 1268,795.2 1270.1,793.8 1271.4,791 1272.8,788.2 1274.2,785.5 1274.5,782.4 1277.1,780.3 1277.4,777.2 1277,774.5 1278.9,772 1279.1,769.4 1278.4,766.7 1276.4,764.3 1276.2,761.2 1275.3,758.4 1276.3,756.1 1277,753.7 1276.3,751.1 1279.4,749.5 1282.6,748 1284.9,745.5 1287.8,743.8 1287.7,740.5 1288.8,737.5 1291.7,735.5 1293,732.3 1289.6,731.9 1286.7,730.2 1283.7,728.5 1280.5,727.1 1278.4,729.8 1275.3,731.3 1272.7,732.3 1270.1,733.4 1269.9,730.6 1267.2,728.9 1266.9,726.1 1266,722.6 1263.8,719.8 1264.9,717.4 1266.7,715.3 1266.9,712.5 1268.4,709.5 1269,706.3 1269.5,703 1271.1,700 1271,697.6 1272.2,694.9 1271.7,692.1 1272.1,689.3 1271.4,686.4 1271.7,683.6 1273.1,681 1271,678.9 1266.8,678.9 1265.8,676.3 1264.8,673.7 1262.1,673.3 1259.5,672.6 1256.8,672.5 1254.3,671.6 1250.2,669.5 1246,668.4 1243.9,664.3 1240.8,664.3 1240.5,667.7 1238.7,670.5 1238.5,673.7 1237.6,676.8 1235.6,679.9 1231.4,678.9 1228.3,679.8 1225.1,679.9 1222.6,678.7 1219.9,678.9 1218.3,676.5 1218.9,673.7 1216.4,672.6 1213.7,672.6 1209.5,673.7 1206.4,670.5 1204.2,672.1 1203.2,674.7 1200.1,677.8 1200.4,681.1 1199.1,684.1 1197,688.3 1194.3,689.1 1192.8,691.4 1189.9,693.1 1187.6,695.6 1185.3,697.7 1184.5,700.8 1183.3,703.6 1181.3,706 1180.5,709.2 1179.2,712.2 1177.9,715 1176.1,717.5 1173.2,717.1 1170.9,718.9 1169.9,714.3 1168.5,711.6 1166.7,709.1 1164.7,706 1163.3,708.3 1161.5,710.2 1157.4,711.2 1153.2,709.1 1152.5,706.5 1152.1,703.9 1152.7,700.6 1154.2,697.6 1153.8,694.8 1155.3,692.4 1152.5,692.8 1150.1,691.4 1146.9,690.3 1142.8,689.3 1140.1,691.4 1138.6,694.5 1137.5,697.3 1135.5,699.7 1133.5,702.5 1133.4,706 1131.6,708 1129.2,709.1 1128.1,711.5 1126.1,713.3 1124,716.4 1125,719 1126.1,721.6 1127.3,724.1 1127.1,726.8 1125,731 1120.9,730 1117.7,728.9 1114.2,728.9 1113.6,726.3 1113.6,723.7 1115.6,719.5 1118.8,716.4 1117.7,713.3 1115.1,712.3 1112.5,713.3 1111.6,710.7 1109.4,709.1 1105.2,710.2 1102.4,710.6 1100,712.2 1099.4,709.7 1099.1,707 1098.2,704.5 1096.5,702.4Z" fill="#323c48" stroke="none"/>
<path d="M1095.5,700 1094.4,697.4 1093.4,694.8 1093.4,691.9 1092.7,689 1090.5,686.6 1090.3,683.5 1090.7,680.7 1090.7,677.9 1091.3,675.2 1087.2,675.2 1084.5,677.6 1080.9,678.3 1078.8,676.7 1076.7,675.2 1073.9,673.2 1072.6,670 1073.5,667.5 1073.8,664.8 1075.7,662.7 1076.3,659.8 1078.4,657.8 1079.9,655.4 1082.5,653.2 1084,650.2 1082.7,647.2 1083,643.9 1083.5,640.6 1085.1,637.6 1084.3,634.7 1083.9,631.7 1081.9,629.3 1079.4,627.1 1076.7,625.1 1074.7,621 1077.8,620.8 1080.9,621 1083.7,619.6 1085.1,616.8 1087.2,614.4 1090.3,613.7 1092.9,614.5 1095.5,613.7 1096.5,616.8 1095.7,614.4 1095.1,612 1095.5,609.5 1093.7,607.2 1093.4,604.3 1091,602 1089.2,599.1 1090.3,594.9 1093.3,593.9 1095.5,591.8 1099.7,589.7 1099,586.5 1099.7,583.4 1098.8,580.2 1097.6,577.2 1096.8,574.4 1095.5,571.9 1093.2,570.6 1091.3,568.8 1090.9,566.2 1090.3,563.6 1087.3,563.1 1085.1,560.9 1082,562.2 1078.8,561.5 1076.4,562.1 1073.9,561.1 1071.5,561.5 1069,563.7 1066.3,565.7 1065.2,568 1063.3,569.7 1062.1,571.9 1059.5,572 1056.9,571.9 1056,569.4 1055.9,566.7 1051.7,565.7 1049.2,566.9 1047.3,568.8 1045.5,570.9 1043.8,573.4 1041.3,575.1 1040.2,579.2 1037.1,579.9 1034,580.9 1032.5,578.5 1030.9,576.1 1029.7,573.8 1027.7,572.3 1025.6,570.9 1027.4,569 1029.8,567.8 1032.5,567.1 1034,564.7 1034.9,562.1 1037.1,560.5 1036.9,557.4 1037.1,554.2 1040.1,552.6 1042.3,550.1 1043.2,547.1 1045.5,544.8 1048.1,543.8 1050.7,542.8 1049.7,540.1 1050.7,537.5 1053.5,536.3 1055.9,534.4 1056.8,532 1056.7,529.6 1056.9,527.1 1058.7,524.8 1059,521.9 1062.1,525 1064.5,522.6 1067.4,520.9 1069.1,523.3 1071.5,525 1075.7,525 1076.4,521.9 1076.7,518.8 1078.7,516.3 1080.5,513.5 1082.5,511.4 1084.7,509.4 1087.6,509 1089.9,507.3 1091.8,504.4 1091.9,501 1091.3,497.9 1090.9,494.8 1091.9,490.6 1090.6,488.3 1088.8,486.4 1085.5,486.9 1082.6,485.4 1082.5,482.7 1081.5,480.2 1080.8,476.9 1079.4,473.9 1080.5,470.8 1079.4,467.6 1079,464.9 1076.9,462.9 1076.3,460.3 1076,457.2 1076.3,454.1 1078.6,452.8 1080.5,451 1080.2,448.3 1081.8,446.1 1082.6,443.7 1079.4,440.5 1077.9,443.1 1075.3,444.7 1074.8,441.8 1075,439.1 1076.3,436.4 1077.6,433.7 1076.9,430.6 1078.4,428 1078.6,425.1 1079.6,422.4 1080.5,419.7 1082.6,418.1 1082.5,415 1084.7,413.4 1080.5,411.3 1077.9,410.4 1075.3,409.2 1074.4,406.1 1073.2,403 1073.5,399.7 1072.1,396.7 1072.3,393.5 1071.1,390.5 1072.9,387.6 1073.2,384.2 1073.2,381 1074.2,378 1075.6,375.3 1077.4,372.8 1076.1,370.3 1075.3,367.5 1072.7,366.7 1070.1,367.5 1067.2,367.1 1064.8,368.6 1064.8,364.4 1067.1,362.2 1070.1,361.3 1071.1,358.8 1073.2,357.1 1073.7,353.8 1075.3,350.9 1072.8,349.2 1071.1,346.7 1070,343.6 1069,340.4 1069.7,337.3 1070.1,334.2 1069.6,330 1070.3,327.3 1071,324.7 1073.2,322.7 1073.8,320 1074.5,317.4 1075.7,314.9 1076.3,312.2 1076.4,308.8 1074.6,306 1072,304.1 1069,302.9 1070.1,299.8 1071.1,296.6 1072,294.2 1072.9,291.8 1073.2,289.3 1071.7,285.1 1072.9,282.6 1076.2,282.1 1077.9,280.1 1079.4,277.8 1080.6,274.8 1080.8,271.6 1080.5,268.4 1081.7,266.2 1083.1,264.1 1084.7,262.2 1084.3,259.4 1086,257.1 1085.3,254.2 1086.7,251.8 1087.2,249.2 1088.8,247.3 1090,245.1 1091.9,243.4 1092.6,240.9 1093.1,238.3 1094,235.9 1096.1,234 1099.1,232.7 1102.4,233 1104.9,231.9 1107.6,232.6 1110.4,232.8 1113.3,232.5 1115.9,234 1117.4,231.8 1117.5,229.2 1118,226.7 1119.6,224.1 1122.2,222.6 1121.1,220.1 1121.1,217.4 1123.6,215.7 1126.4,214.6 1128.8,213.8 1131.1,212.9 1133.7,213.2 1136.1,214.2 1138.5,214.7 1141,213.8 1143.8,213.2 1146.5,212.6 1149.3,212.1 1151.7,211 1154.1,210.8 1156.6,211.5 1159.4,213.1 1161.8,215.3 1166,216.7 1168.4,218.3 1169.6,221.2 1172.2,222.6 1174.4,224.8 1175.4,227.8 1179.5,227.2 1181.5,229.1 1181.6,231.9 1184.7,231.2 1186.8,228.8 1190,225.7 1191.4,221.5 1193.8,222.1 1196.2,222.6 1198.4,220.3 1201.4,219.4 1204.6,217.9 1207.7,216.3 1210.8,215.3 1208.6,213.2 1208.2,210.1 1206.5,208.3 1205.4,205.8 1202.9,204.8 1202,202.3 1199.8,200.7 1199.5,198.1 1197.9,196 1197.7,193.4 1198,190.2 1198.8,187.1 1197.1,184.8 1196.7,181.9 1197.1,177.7 1200.2,177.2 1202.9,175.6 1205.7,175 1208.6,174.9 1211.3,173.6 1214.1,175.4 1216.5,177.7 1218.8,175.6 1221.7,174.6 1222.4,171.7 1221.7,168.8 1224.7,169.4 1227.4,168.6 1230.1,167.3 1232.3,168.6 1234.8,169.4 1237.4,169.4 1237.9,172.2 1239.4,174.6 1241.9,174.5 1244.1,175.7 1246.5,175.9 1248.8,176.7 1251.5,175.9 1254.1,176.2 1256.6,177 1259.2,177.7 1261.9,177.4 1264.4,178.7 1267,179.5 1269.7,178.8 1271.3,181.3 1272.8,184 1274.9,186.4 1278,187.1 1279.3,190.4 1282.2,192.3 1285.1,193.8 1288.4,193.4 1291.6,193.1 1294.7,193.4 1297.7,194.7 1299.9,197.1 1302.5,197 1304.9,197.4 1307.2,198.6 1310.2,197.4 1313.5,197.5 1315.7,196.2 1317.6,194.4 1320.5,196.3 1323.9,196.5 1326,199.2 1329.1,200.7 1332.3,201.2 1335.4,201.7 1337.2,203.5 1339.5,204.8 1339.4,207.6 1340.6,210.1 1344.1,210.8 1346.8,213.2 1348.7,215 1351,216.3 1350.7,219.6 1352.1,222.6 1354.3,225.1 1357.3,226.7 1359,228.9 1361.5,230.1 1363.5,231.9 1365.2,229.8 1367.7,228.8 1366.7,233 1368.8,235.3 1371.8,236.2 1374,238.2 1373.9,240.9 1375,243.4 1375.6,245.5 1378.4,246 1380.9,244.5 1382.1,242 1383.4,239.5 1385,237.2 1387.4,235.7 1388.2,233 1391.3,233.5 1394.4,233 1397.4,233.9 1399.6,236.1 1401.9,234.3 1404.8,234 1408.3,234.9 1411.1,237.2 1413.9,235.1 1415.3,231.9 1417.5,230.6 1418.2,227.9 1420.5,226.7 1422.7,223.9 1423.6,220.5 1426.5,218.6 1427.8,215.3 1430.1,213.4 1431.9,211.1 1436.1,210.1 1437.2,214.2 1439,217.2 1440.3,220.5 1441.9,218 1443.4,215.3 1445.9,214.2 1446.5,217.4 1445.5,220.5 1444.6,223.3 1441.2,224 1440.3,226.7 1438.6,229 1437.4,231.5 1436.1,234 1435.5,237.2 1437,240.2 1437.2,243.4 1436.9,246.2 1437.5,248.7 1439.3,251.1 1439.2,253.8 1442.4,251.8 1443.5,249.4 1445.5,247.6 1449.7,247.6 1451.2,250.6 1451.8,253.8 1452.8,258 1455.2,256.4 1458,255.9 1460.2,254 1462.2,251.8 1463.3,249.4 1465.2,247.5 1466.2,245 1468.4,243.4 1470.5,241.8 1470.9,239.1 1472.5,237.1 1474.2,235.2 1476.1,233.5 1476.8,230.9 1478.3,228.7 1480.8,227.3 1481.8,224.7 1483.5,222.6 1485.1,220.5 1486.8,218.7 1487.7,216 1490,214.8 1491.3,212.5 1493.5,211.1 1494.6,208.6 1497.6,208.1 1498.5,205.4 1500.8,204.2 1501.2,207.1 1501.4,210.1 1500.3,212.8 1500.1,215.6 1499.7,218.4 1499.4,221.3 1498.3,223.9 1497.6,226.7 1500.7,227.4 1503.9,227.8 1506.7,227.3 1509.1,225.7 1511,228.5 1511.2,231.9 1515.4,233 1515.8,236.1 1516.4,239.2 1514.7,241.7 1512.2,243.4 1510.5,245.8 1508.1,247.6 1510.9,249.7 1514.3,250.7 1515.9,253.3 1517.5,255.9 1516.8,259 1516.4,262.2 1514.8,265.1 1514.3,268.4 1513.8,271.3 1515.2,274 1515.4,276.8 1513.8,279.5 1512.6,282.3 1511.2,285.1 1510.5,287.9 1509.4,290.6 1509.1,293.5 1509.9,296.2 1510.4,299.1 1511.2,301.8 1512.8,303.9 1514.3,306 1518.5,303.9 1522.7,302.9 1524.2,305.2 1526.8,306 1528.1,308.4 1530,310.2 1532.6,311 1535.2,310.2 1535.9,313.7 1538.3,316.4 1539.4,319.5 1539.4,322.7 1543.5,324.8 1544.4,327.9 1545.6,331 1549.8,333.1 1549.3,335.9 1550.8,338.3 1553.4,339 1556,338.3 1557.8,340.6 1558.1,343.5 1558.6,346.4 1557.6,349.1 1557.1,351.9 1557.7,354.7 1556.9,357.4 1556,360 1557.5,357.1 1557.7,360.1 1555.7,362.6 1555.4,365.5 1554.4,368.2 1553.8,370.9 1554.3,373.8 1553.3,376.9 1556.3,377.9 1558.5,380.1 1561.6,383.2 1564.8,385.3 1562.8,387.7 1561.6,390.5 1563.5,392.8 1565.8,394.7 1568,396.3 1568.9,398.8 1567.6,401.8 1567.9,405.1 1565.5,406.5 1564.8,409.2 1563.8,412.6 1561.6,415.5 1558.8,416.9 1557.5,419.7 1556.1,421.9 1554.3,423.8 1551.7,424.9 1549.1,425.9 1546.3,425.4 1543.9,427 1542.7,429.5 1542.9,432.2 1545,433.9 1546,436.4 1547,440.5 1543.9,443.7 1541.3,444.3 1538.7,444.7 1536.1,445.7 1533.5,446.8 1531.1,448.7 1528.3,449.9 1526.7,452.5 1524.1,454.1 1522.9,456.9 1521,459.3 1518.6,461.1 1516.8,463.5 1518.9,467.6 1520.4,470.6 1519.9,473.9 1518.2,477 1516.8,480.2 1515.4,483.4 1513.7,486.4 1513.2,489.1 1511.2,490.8 1509.5,492.7 1507.9,494.6 1506.7,496.8 1505.3,498.9 1505.2,502.4 1503.2,505.2 1501.6,508.1 1502.2,511.4 1502.1,514.6 1503.2,517.7 1502.7,521 1504.3,524 1504.1,527.3 1502.2,530 1501.9,527.5 1501.6,525.1 1503.4,522.8 1502.5,520.3 1502.3,517.9 1503.2,515.5 1504.4,513.2 1504.4,510.8 1503.9,508.3 1504.5,510.8 1504.8,513.3 1503.2,515.9 1504.1,518.4 1504.3,520.9 1503.7,523.6 1504.9,526.5 1503.9,529.2 1506,531.4 1506.4,534.4 1509.3,536.1 1512.6,537.1 1515.7,536.1 1518.9,535.5 1521.7,533.6 1525.1,533.4 1528.1,533 1530.3,530.9 1530.4,534.2 1531,537.5 1529,540.4 1528.3,543.8 1528.8,546.7 1526.8,549.2 1527.2,552.1 1527,554.9 1524.4,556.7 1524.1,559.4 1523.2,561.9 1522.4,564.4 1521,566.7 1521.9,569.3 1523,571.9 1523.2,574.9 1525.1,577.2 1528,578.8 1530.3,581.3 1532.4,585.5 1535.6,588.6 1535.3,591.5 1533.5,593.8 1532.9,596.9 1532.4,600.1 1531.4,603.5 1529.3,606.4 1529.1,609.8 1527.2,612.6 1528.6,614.8 1529.6,617.2 1529.3,619.9 1530.3,622.2 1530.4,624.7 1530.3,627.2 1532.7,629 1534.5,631.4 1536.8,632.6 1539.5,632.4 1541.8,633.5 1544.4,635.1 1547,636.6 1550.6,636.4 1553.9,637.6 1553.4,640.8 1552.2,643.9 1552.7,646.7 1551.2,649.1 1553.3,650.2 1552.8,653.2 1552.2,656.1 1550.2,658.5 1548.1,661.4 1547,664.8 1546.4,667.9 1546,671 1546.7,673.6 1546,676.3 1545,678.9 1543.9,681.5 1541.1,683.5 1539.7,686.7 1538.8,689.3 1536.6,690.9 1539.3,691 1541.8,689.8 1544.9,689.2 1548.1,688.8 1551.2,687.9 1554.3,687.1 1556.9,687.3 1559.1,685.9 1561.6,685.6 1563.7,687.2 1565.8,688.8 1565.7,691.4 1566.4,694 1563.3,695.3 1561.6,698.2 1559.2,700 1556.4,701.3 1553.3,703.4 1550.2,704.4 1548,706.1 1547,708.6 1545,711.5 1543.9,714.8 1544.5,718 1545.6,721.1 1545.2,724.3 1544.8,727.4 1543.9,730.5 1543.2,734 1540.8,736.7 1540.5,739.5 1539.5,741.9 1537.6,744 1536.1,747 1535.6,750.3 1536.5,752.7 1537,755.1 1536.6,757.6 1539,760.3 1539.7,763.8 1540,767.2 1541.8,770.1 1541.8,774.3 1539.5,776.5 1538.7,779.5 1537.8,782.5 1537.6,785.7 1535.8,787.7 1533.5,788.9 1533,792.2 1531.4,795.1 1529.7,798 1527.2,800.3 1525.2,802 1523,803.5 1518.9,801.4 1516.4,802.6 1513.7,802.4 1510.6,803.1 1507.4,803.5 1505,805 1502.2,805.6 1501.1,801.4 1499.1,798.5 1495.9,797.2 1493.1,795.2 1489.7,795.1 1487.1,794 1484.5,793 1482,791.4 1480.3,788.9 1477.2,785.7 1476.4,783 1474,781.6 1473,778.4 1470.5,779.4 1467.8,779.5 1464.7,782.6 1460.5,783.7 1459.2,786.5 1457.4,788.9 1454.2,792 1451.1,795.1 1449.7,797.6 1446.9,798.3 1442.8,800.3 1438.6,802.4 1434.4,803.5 1431.3,805.6 1430.9,808.7 1431.4,811.3 1431.3,813.9 1433.4,816 1435.5,818.1 1437.5,820.2 1439.6,822.2 1441.7,826.4 1442.8,830.6 1444.4,833 1444.8,835.8 1444.5,838.2 1445.2,840.8 1443.8,843.1 1444.8,846.2 1444.8,849.4 1444.6,852.2 1442.9,854.4 1441.7,856.7 1439.5,858.6 1436.5,858.7 1434.1,860.3 1431.3,859.8 1428.8,860.7 1426.1,860.8 1421.9,860.8 1420.8,858.3 1420.9,855.6 1419.5,852.4 1417.7,849.4 1416.7,846.2 1415.6,843.1 1415.6,839.9 1414.6,836.8 1413.3,834.5 1411.5,832.7 1409.1,830.7 1406.3,829.5 1403.5,828.3 1400.7,826.5 1397.3,826.2 1394.1,825.9 1391,825.1 1388,826.5 1384.8,827.2 1384,824.5 1381.6,823 1378.5,824.1 1374.3,825.1 1371.7,825.9 1369.1,825.1 1366.7,823.6 1363.9,823 1362.6,826.1 1361.8,829.3 1362.5,832.2 1360.4,834.7 1360.8,837.6 1359.3,840.2 1359.1,843.1 1358.7,846 1357.2,848.9 1356.6,852.2 1358.8,854.8 1361.8,856.4 1362.3,859.3 1361.1,862 1360.8,864.8 1359.2,866.8 1357.6,868.9 1355,870.5 1353.5,873.1 1351.4,874.5 1349.8,876.3 1348.6,878.5 1347.2,880.4 1345,878.1 1342,877.3 1339.3,877.4 1336.8,878.3 1333.7,877.9 1330.5,878.3 1326.4,876.2 1323.4,877.3 1320.1,877.3 1317.1,878.8 1313.8,878.3 1312.2,880.5 1309.7,881.4 1309.3,883.9 1309.1,886.5 1307.6,888.7 1304.3,888.5 1301.3,889.8 1299.6,891.8 1298.2,894 1295.7,892.7 1293,891.9 1291.1,890.1 1288.8,888.7 1289.7,886.2 1289.9,883.5 1291.4,880.9 1293,878.3 1291.2,876.2 1292.2,873.3 1290.9,871 1290.9,867.8 1289.9,864.8 1290.4,861.7 1290.9,858.5 1289.4,855.3 1287.8,852.2 1289.2,849.2 1289.9,846 1287.4,843.3 1286.7,839.7 1287.2,836.6 1286.7,833.5 1284.3,832.3 1282.6,830.3 1280.4,832.2 1277.4,832.4 1274.9,830.7 1273.2,828.3 1271.1,829.3 1268.6,831 1266.9,833.5 1265.6,835.7 1263.1,836.6 1261.7,838.7 1258.1,839.3 1255.5,841.8 1254.8,844.6 1254.4,847.5 1253.4,850.2 1252.3,854.3 1249.7,855.4 1247.1,856.4 1242.9,857.5 1243,855 1242.8,852.6 1241.9,850.2 1241.4,847.3 1240.8,844.5 1239.8,841.8 1239.6,838.8 1240.4,836.1 1241.9,833.5 1242.4,830.5 1244.5,828.1 1245,825.1 1246.9,823.4 1249.3,822.5 1251.3,821 1252.6,818.1 1255.5,816.8 1254.5,814 1255,811.2 1255.5,808.4 1257.5,806.6 1259.3,804.5 1260.7,802.2 1262.6,800.3 1263.8,798 1265.6,796.2 1268,795.2 1270.1,793.8 1271.4,791 1272.8,788.2 1274.2,785.5 1274.5,782.4 1277.1,780.3 1277.4,777.2 1277,774.5 1278.9,772 1279.1,769.4 1278.4,766.7 1276.4,764.3 1276.2,761.2 1275.3,758.4 1276.3,756.1 1277,753.7 1276.3,751.1 1279.4,749.5 1282.6,748 1284.9,745.5 1287.8,743.8 1287.7,740.5 1288.8,737.5 1291.7,735.5 1293,732.3 1289.6,731.9 1286.7,730.2 1283.7,728.5 1280.5,727.1 1278.4,729.8 1275.3,731.3 1272.7,732.3 1270.1,733.4 1269.9,730.6 1267.2,728.9 1266.9,726.1 1266,722.6 1263.8,719.8 1264.9,717.4 1266.7,715.3 1266.9,712.5 1268.4,709.5 1269,706.3 1269.5,703 1271.1,700 1271,697.6 1272.2,694.9 1271.7,692.1 1272.1,689.3 1271.4,686.4 1271.7,683.6 1273.1,681 1271,678.9 1266.8,678.9 1265.8,676.3 1264.8,673.7 1262.1,673.3 1259.5,672.6 1256.8,672.5 1254.3,671.6 1250.2,669.5 1246,668.4 1243.9,664.3 1240.8,664.3 1240.5,667.7 1238.7,670.5 1238.5,673.7 1237.6,676.8 1235.6,679.9 1231.4,678.9 1228.3,679.8 1225.1,679.9 1222.6,678.7 1219.9,678.9 1218.3,676.5 1218.9,673.7 1216.4,672.6 1213.7,672.6 1209.5,673.7 1206.4,670.5 1204.2,672.1 1203.2,674.7 1200.1,677.8 1200.4,681.1 1199.1,684.1 1197,688.3 1194.3,689.1 1192.8,691.4 1189.9,693.1 1187.6,695.6 1185.3,697.7 1184.5,700.8 1183.3,703.6 1181.3,706 1180.5,709.2 1179.2,712.2 1177.9,715 1176.1,717.5 1173.2,717.1 1170.9,718.9 1169.9,714.3 1168.5,711.6 1166.7,709.1 1164.7,706 1163.3,708.3 1161.5,710.2 1157.4,711.2 1153.2,709.1 1152.5,706.5 1152.1,703.9 1152.7,700.6 1154.2,697.6 1153.8,694.8 1155.3,692.4 1152.5,692.8 1150.1,691.4 1146.9,690.3 1142.8,689.3 1140.1,691.4 1138.6,694.5 1137.5,697.3 1135.5,699.7 1133.5,702.5 1133.4,706 1131.6,708 1129.2,709.1 1128.1,711.5 1126.1,713.3 1124,716.4 1125,719 1126.1,721.6 1127.3,724.1 1127.1,726.8 1125,731 1120.9,730 1117.7,728.9 1114.2,728.9 1113.6,726.3 1113.6,723.7 1115.6,719.5 1118.8,716.4 1117.7,713.3 1115.1,712.3 1112.5,713.3 1111.6,710.7 1109.4,709.1 1105.2,710.2 1102.4,710.6 1100,712.2 1099.4,709.7 1099.1,707 1098.2,704.5 1096.5,702.4Z" fill="none" stroke="#161b22" stroke-width="0.9" stroke-linejoin="round"/>
<path d="M1115.9,234 1119,235 1122.2,235.1 1122.3,238.2 1120,240.5 1119.7,243.4 1121,246.2 1121.5,249.2 1123.2,251.8 1123.7,254.5 1125.2,256.9 1126.5,259.3 1126.4,262.2 1129.5,264.3 1131.7,262.7 1131.6,259.6 1133.7,258 1137.8,257 1138.6,259.4 1139.5,261.8 1139.9,264.3 1140.5,267 1139.8,269.9 1140.5,272.6 1142.2,275 1145.1,275.7 1148.1,274.2 1151.4,273.7 1153.3,275.5 1155.6,276.8 1156.5,279.3 1156.6,282 1154.4,283.4 1152.4,285.1 1153,287.9 1153.9,290.6 1153.5,293.5 1155.6,295.1 1156.6,297.6 1158.8,296 1161.8,296.4 1163.9,294.5 1166,296.6 1168.1,298.7 1170.6,300.9 1172.2,303.9 1175.4,306 1175,309.2 1176.4,312.2 1179.5,314.3 1177.9,317.3 1178.5,320.6 1180.1,322.6 1181.6,324.8 1183.9,327 1184.8,330" fill="none" stroke="#161b22" stroke-width="0.9" stroke-linejoin="round"/>
<path d="M1210.2,216.3 1212.4,218.5 1213.4,221.5 1216.3,221 1219,221.9 1221.7,222.6 1222.8,224.7 1225.2,223.8 1227.7,224.1 1230.1,224.7 1233,224.8 1235.6,226.2 1238.4,226.7 1240.9,227.8 1243.5,227.8 1246.2,227.3 1248.8,227.8" fill="none" stroke="#161b22" stroke-width="0.9" stroke-linejoin="round"/>
<path d="M1236.3,315.4 1233.2,316.1 1230.1,316.4 1229,319.2 1228.2,322.1 1226.9,324.8 1224.6,325.8 1222.3,327.1 1219.6,326.8 1216.6,327.8 1213.4,327.9 1212,325.1 1208.6,324.3 1207.1,321.6 1205.4,319.9 1203.8,317.9 1201.9,316.4 1199.6,319.2 1198.8,322.7 1197.9,325.1 1196.4,327.1 1194.6,328.9 1191.7,331 1188.3,332.1 1185.6,330.7 1183.1,328.9 1184.8,330" fill="none" stroke="#161b22" stroke-width="0.9" stroke-linejoin="round"/>
<path d="M1374,239.2 1373.6,241.8 1372,244.3 1371.7,246.9 1371.9,249.7 1370.8,252.2 1372.4,255 1372.1,257.6 1370.8,260.1 1369.7,262.8 1368.6,265.4 1368.7,268.4 1367.7,271.2 1366.5,273.9 1365.6,276.8 1367.1,279.4 1366.6,282.3 1366.7,285.1 1365,287.5 1364.4,290.1 1363.6,292.7 1363.5,295.6 1363,298.9 1364.6,301.8 1366.6,303.6 1367.7,306 1368.9,308.7 1369.1,311.4 1368.7,314.3 1368.9,316.8 1368.7,319.3 1368.4,321.9 1369.1,324.3 1369.8,326.8 1370,329.5 1370.3,332.2 1371.5,334.7 1371.9,337.3 1372.3,339.9 1373.9,342.3 1372.9,345.2 1374,347.7 1372.9,350.1 1370.1,351.3 1369,353.7 1367.7,356 1365.9,358.3 1363.5,360" fill="none" stroke="#161b22" stroke-width="0.9" stroke-linejoin="round"/>
<path d="M1375.6,251.8 1377.7,253.4 1378.9,255.6 1379.8,258 1381.1,260.8 1382.9,263.2 1384.7,266.1 1387.1,268.4 1389.8,269.9 1391.3,272.6 1394.4,273.3 1396.5,275.7 1399.1,275.3 1401.7,274.7 1404.8,271.6 1407.4,273.3 1410.1,274.7 1411.8,276.7 1413.2,278.9 1413.2,282.1 1412.1,285.1 1413.5,287.3 1415.3,289.3 1418.5,289.9 1420.5,292.4 1422.9,293.7 1424.7,295.6 1427.8,295.5 1430.9,295.6 1433,298 1436.1,298.7 1436.5,301.2 1436.7,303.8 1438.2,306 1437.6,308.8 1437.4,311.7 1436.1,314.3 1435.2,316.7 1432.5,317.9 1431.9,320.6 1429.2,322.3 1427.4,325.1 1424.7,326.8 1422.7,328.8 1419.8,328.9 1417.4,330 1414.1,331.2 1411.1,333.1 1410.2,335.9 1409.5,338.8 1408,341.4 1406,343.3 1403.8,345 1402.8,347.7 1401.9,350.1 1400.9,352.5 1398.6,354 1397.9,357.1 1396.5,360 1396,361.3 1398.1,362.7 1400,364.4 1400,366.5 1401.9,368.4 1404.2,369.6 1406.8,371.8 1408.3,374.8 1410.9,373.2 1412.5,370.7 1415.6,369.6 1417.3,372.5 1419.8,374.8 1421.3,376.9 1422.9,379 1425.4,378.7 1427.6,380.8 1430.2,380.1 1432.6,379.7 1435.1,380.8 1437.5,380.1 1440.1,382.3 1441.7,385.3 1444.1,383.7 1446.9,383.2 1449.3,382.1 1451.1,380.1 1453.2,381.5 1453.9,384.3 1456.3,385.3 1458.4,382.7 1460.5,380.1 1460.5,377.1 1461.3,374.4 1462.6,371.7 1463.5,368.5 1464.7,365.5 1467.8,362.3 1471.9,364.4 1474.4,364.4 1476.9,364.7 1479.2,363.4 1483.4,364.4 1485.2,366.7 1485.5,369.6 1488.2,370.4 1490.7,371.7 1492.8,374 1493.8,376.9 1496.1,378.9 1499.1,379 1501.7,380.5 1503.2,383.2 1505.6,384.2 1507.4,386 1508.4,388.4 1511.2,390.1 1513.7,392.1 1516.6,392.1 1518.9,390.5 1521.6,389 1523,386.3 1525,384 1526.2,381.1 1529.4,380.5 1531.4,378 1534.7,378.4 1537.6,376.9 1540.6,375.5 1543.9,374.8 1546.4,374.6 1548.4,376.8 1550.8,376.9 1553.3,376.9" fill="none" stroke="#161b22" stroke-width="0.9" stroke-linejoin="round"/>
<path d="M1516.8,464.5 1513.5,465 1510.5,463.5 1508.7,461.6 1506.4,460.3 1502.2,461.4 1500.9,458.3 1500.1,455.1 1497,455.1 1495.1,457.4 1492.8,459.3 1490.4,461.7 1487.6,463.5 1486,466.1 1483.4,467.6 1480.3,468.7 1477.2,467.6 1474.4,467.1 1471.9,465.6 1470.6,462.5 1469.9,459.3 1470.1,458.4 1468.1,455.9 1465,455 1462.3,455.3 1460,454 1456.8,455.9 1455.1,458.4 1452.9,456.6 1450.1,456.8" fill="none" stroke="#161b22" stroke-width="0.9" stroke-linejoin="round"/>
<path d="M1450.1,456.8 1449.9,459.5 1448.4,461.8 1447.9,464.4 1446.8,466.8 1444.9,469 1444.3,471.8 1444,474.4 1445.1,476.8 1446.1,479.3 1446.8,481.8 1446.4,484.7 1444.3,486.8 1445.2,489.3 1445.9,491.8 1444.9,494.4 1443.4,496.8 1443.8,500 1441.7,504.2 1440.1,506.7 1441,509.9 1439.6,512.5 1440.3,515.3 1439.5,518.2 1440.7,520.9 1442.2,523.8 1441.7,527.1 1443.4,530.2 1444.8,533.4 1445.8,536.8 1448,539.6 1449,543 1451.1,545.9 1453.3,547.4 1454.7,549.5 1455.3,552.1 1457.4,549 1460.2,548.6 1462.6,550.1 1465.6,551.5 1468.8,551.1 1470.8,553.4 1471.9,556.3 1470.4,558.7 1469.9,561.5 1467,561.7 1464.7,563.6 1462.8,565.4 1460.5,566.7 1462,569.7 1462.6,573 1463.3,576.1 1465.7,578.2 1465.9,580.8 1466.7,583.4 1468.5,585.2 1469.1,587.9 1470.9,589.7 1470.2,592.9 1468.8,595.9 1468.2,599.2 1466.7,602.2 1469.2,603.6 1469.9,606.4 1474,608.4 1477.2,606.4 1479.6,607.9 1482.4,608.4 1483.8,611.1 1486.5,612.6 1485.2,615.7 1484.5,618.9 1482.5,621.1 1482.4,624.1 1484.4,626.3 1484.5,629.3 1485.6,632.4 1485.5,635.6 1487.6,637.1 1489.7,638.7 1492.8,638 1494.9,635.6 1499.1,637.6 1498.6,640.9 1500.1,643.9 1503.2,647 1503.1,649.5 1503.1,651.9 1502.2,654.3 1502.4,657.1 1502.2,659.9 1502.2,662.7 1502.4,666.1 1504.3,668.9 1505.3,671.6 1504.3,674.6 1505.3,677.3 1507.6,679.8 1510.5,681.4 1513.7,684.6 1514,687.5 1515.7,689.8 1514.6,692.8 1514.7,696 1513.7,700 1512.6,703.4 1514.5,706.1 1516.8,708.6 1521,706.5 1523,702.3 1527.2,701.3 1528.4,699 1530.3,697.1 1531.8,695.1 1533.6,693.4 1535.6,691.9 1536.6,690.9" fill="none" stroke="#161b22" stroke-width="0.9" stroke-linejoin="round"/>
<path d="M1469.9,606.4 1467.5,604.8 1464.7,604.3 1461.4,604.7 1458.4,603.2 1458,606 1456.3,608.4 1454.3,610.2 1453.2,612.6 1454.8,615.6 1455.3,618.9 1457.9,619.7 1459.4,622" fill="none" stroke="#161b22" stroke-width="0.9" stroke-linejoin="round"/>
<path d="M1148,624.7 1145,624.6 1142.8,622.6 1140.1,623 1137.5,623.6 1135.7,625.5 1133.4,626.7 1130.5,628.6 1129.2,631.9 1129.4,635.3 1131.3,638.2 1131.4,641.2 1133.4,643.4 1133.4,646.6 1132.3,649.7 1136.5,651.8 1139.1,652.6 1140.7,654.9 1143,657 1143.8,660.1 1144.9,663.2 1145.9,666.4 1144.9,669.4 1144.8,672.6 1145.5,675.7 1145.9,678.9 1145.4,682.2 1143.8,685.1 1142.8,689.3" fill="none" stroke="#161b22" stroke-width="0.9" stroke-linejoin="round"/>
<path d="M1246,668.4 1246.3,665.3 1247,662.2 1248.3,659.1 1249.1,655.9 1250.2,653.2 1251,650.5 1251.2,647.6 1252.3,644.9 1252.2,642 1252.2,639.2 1252.5,636.4 1255,634.6 1255.4,631.9 1257.5,633 1258.3,635.4 1258,637.9 1258.5,640.3 1259.5,642.7 1259.4,645.3 1260.6,647.6 1263.2,649.2 1264.8,651.8 1267.2,650.2 1270,649.7 1271.7,647.7 1274.1,646.5 1273.6,644 1275.4,641.7 1274.8,639.2 1274.7,636.4 1274,633.7 1274.1,630.9 1273.5,628.2 1274.5,625.2 1273.1,622.6 1274.7,620.5 1276.2,618.4 1276,615.6 1277.6,613 1277.3,610.1 1277.6,607.3 1278.4,604.5 1277.3,601.7 1281.4,599.6 1284.2,598.7 1287,599.5 1289.8,599.6 1292.6,600.2 1295.4,600.1 1298.1,599.2 1298.4,603.2" fill="none" stroke="#161b22" stroke-width="0.9" stroke-linejoin="round"/>
<path d="M1096.5,616.8 1098.7,619.1 1101.8,619.9 1105.9,622 1107.2,618.8 1110.1,616.8 1112.2,612.6 1116.4,611.6 1120.5,613.7 1123.7,610.5 1127.8,611.6 1129.3,614 1129.9,616.8 1132.9,617.6 1135.1,619.9 1139.3,622 1142.4,624.1 1146.6,626.2 1148.8,623.6 1151.8,622 1152.8,619.4 1151.8,616.8 1152.5,613.7 1152.9,610.5 1152.1,607 1149.7,604.3 1150,601.1 1150.8,598 1153.9,594.9 1154.2,592.1 1152.9,589.7 1154.4,587.5 1156,585.5 1157.8,583.5 1160.2,582.4 1161.1,580 1161.8,577.7 1161.2,575.1 1162.8,572.8 1165.4,571.9 1165.6,568.8 1165.4,565.7 1167.6,563.8 1169.5,561.5 1172,560.4 1174.8,560.5 1177.3,559.2 1180,558.4 1179.7,555.1 1181,552.1 1185.2,554.2 1189.4,556.3 1189.8,553 1191.4,550.1 1193.1,547.6 1195.6,545.9 1197.9,543.4 1199.8,540.7 1202.8,542.5 1206,543.8 1206.1,541.2 1206.4,538.6 1208.1,536.5 1210,533.4" fill="none" stroke="#161b22" stroke-width="0.9" stroke-linejoin="round"/>
<path d="M1082.6,485.4 1085.2,485 1087.8,485.4 1089.5,483.2 1089.9,480.2 1091.9,478.1 1094.3,475.7 1097.2,473.9 1099.9,473.8 1102.4,474.9 1105.3,473.9 1107.6,471.8 1109.2,468.7 1110.7,465.6 1108.8,463.3 1108.6,460.3 1110.1,457.6 1112.8,456.2 1114.7,453.5 1117,451 1118.2,448.4 1119.1,445.7 1123.2,445.7 1124.3,449.9 1128.4,451 1130.9,453.3 1133.7,455.1 1136.3,454.2 1138.9,455.1 1143,455.1 1145.7,457.2 1147.2,460.3 1150.3,457.2 1151.3,454.7 1151.4,452 1153.3,449.3 1155.6,446.8 1156.7,443.4 1158.7,440.5 1156.6,436.4 1157.8,434 1159.7,432.2 1162.5,430.8 1163.9,428 1166,423.8 1167.2,421.5 1169.1,419.7 1168.1,415.5 1166.1,412.8 1163.9,410.3 1163.1,407.2 1162.9,404 1166,400.9 1163.9,396.7 1161.2,395.9 1158.7,394.7 1158.4,391.8 1156.6,389.4 1159,388 1159.7,385.3 1160.5,382.1 1161.8,379 1161.1,375.9 1161.8,372.8 1164.5,372.7 1167,371.7 1167.4,368.9 1169.1,366.5 1167.5,364.1 1168.1,361.3 1170.8,359.8 1172.2,357.1 1173.1,353.9 1174.3,350.9 1175.4,348.2 1174.8,345.3 1175.4,342.5 1177.7,340.3 1178.5,337.3 1180.2,334.8 1181.4,332 1183.7,330" fill="none" stroke="#161b22" stroke-width="0.9" stroke-linejoin="round"/>
<path d="M1231.3,395.7 1229.8,398 1227,398.4 1225,399.9 1222.7,401.7 1220.9,404 1218.5,406.1 1217.7,409.2 1220.9,412.4 1223.5,413.2 1225,415.5 1225.3,418.7 1226.1,421.8 1229.2,424.9 1229,428 1228.2,431.1 1231.3,434.3 1232.3,436.9 1233.4,439.5 1231.3,443.7 1234.4,446.8 1238.6,446.8 1240.7,442.6 1243.8,441.6 1246.9,444.7 1244.8,448.9 1241.7,451 1242,453.7 1240.7,456.2 1237.5,459.3 1236.4,462.1 1234.4,464.5 1231.8,466 1229.2,467.6 1226.6,466.7 1224,467.6 1223.8,470.6 1221.9,472.9 1223,475.5 1224,478.1 1224.4,481.4 1226.1,484.3 1226.2,487.3 1228.2,489.5 1230.3,491.2 1231.3,493.7 1231,496.6 1229.2,498.9 1226.4,500.3 1225,503.1 1221.9,506.2 1221.3,502.6 1218.8,500 1216.2,500.5 1213.6,501 1212.3,504.2 1209.4,506.2 1207.9,508.6 1208.3,511.4 1210.1,513.4 1211.5,515.6 1211.7,519 1213.6,521.9 1212.3,524.4 1211.5,527.1 1210.4,530" fill="none" stroke="#161b22" stroke-width="0.9" stroke-linejoin="round"/>
<path d="M1252.1,379 1254.8,380.1 1257.8,379 1260.5,380.1 1263.4,380.1 1265.9,378.4 1268.8,378.4 1271.9,378 1275.1,378 1278.1,378 1280.8,377.3 1283.4,375.9 1286.3,374.2 1289.7,373.8 1291.4,371.9 1293.7,370.8 1295.9,369.6 1298,367.9 1299.9,365.9 1302.2,364.4 1305.3,363.6 1308.4,364.4 1310.9,366.1 1312.6,368.6 1314.6,366.3 1315.7,363.4 1318.5,363.7 1321,362.3 1324.4,362.4 1327.2,364.4 1330.4,363.5 1333.5,362.3 1335.9,361.2 1337.6,359.2 1340.4,358.7 1342.9,360.2 1345.3,361.5 1348.1,361.3 1351.1,359.9 1354.3,360.2 1357.5,359.9 1360.6,359.2 1363.5,360" fill="none" stroke="#161b22" stroke-width="0.9" stroke-linejoin="round"/>
<path d="M1246.9,444.7 1249.4,446.9 1252.1,448.9 1253.9,446.4 1255.3,443.7 1255.6,441.1 1256.5,438.8 1257.4,436.4 1259.1,434.4 1260.5,432.2 1261.9,430 1263.6,428 1266.3,427.3 1268.8,425.9 1270.3,423.8 1271.9,421.8 1274,418.6 1278.2,420.7 1280.3,422.8 1282.9,422.7 1285.5,422.8 1289.7,421.8 1292.8,422.8 1294.2,425.1 1293.2,427.7 1293.8,430.1 1294.4,433.2 1294.9,436.4 1296,438.9 1295.9,441.6 1297.7,443.6 1300.1,444.7 1300.6,447.5 1302.2,449.9 1305.3,446.4 1308.4,444.7 1312.6,446.8 1314.7,449.9 1318.9,449.9 1321.5,448.8 1324.1,447.8 1326.4,446.1 1329.3,445.7 1331.9,445.1 1334.5,444.7" fill="none" stroke="#161b22" stroke-width="0.9" stroke-linejoin="round"/>
<path d="M1334.5,444.7 1334.2,441.4 1335.6,438.4 1334.8,435.3 1335.6,432.2 1337,429 1338.7,425.9 1338.9,422.5 1340.8,419.7 1342.8,418 1344.9,416.5 1347.6,415.5 1350.2,414.5 1352.6,413 1355.4,413.4 1357.9,414.7 1360.6,415.5 1363.2,416.3 1364.8,418.6 1366.8,419.7 1369.2,418.7 1371.3,417.4 1373.1,415.5 1375.7,414 1378.3,412.4 1380.5,410.4 1383.5,410.3 1386.3,409.3 1389,408 1391.9,407.2 1394.7,407.8 1397.2,405.7 1400,406.1 1401.6,403.3 1401.7,400 1403.9,398.5 1404.6,396.1 1406,394.1 1406.7,391.7 1407.4,389.3 1410.1,388.1 1410.4,385.5 1411.7,383.4 1412.9,380.8 1413.1,378 1411.6,375.2 1412.6,372.5" fill="none" stroke="#161b22" stroke-width="0.9" stroke-linejoin="round"/>
<path d="M1334.5,444.7 1334.4,448 1335.6,451 1339.7,453 1340.5,455.7 1342.9,457.2 1344.9,461.4 1346.4,464.3 1346,467.6 1347.4,470.6 1348.1,473.9 1351.2,476 1354.3,478.1 1354.3,481.3 1355.4,484.3 1354.3,488.5 1356.7,490.3 1358,493 1359.9,495.1 1362.9,495.2 1365,497 1368.4,498.2 1372,498 1375.1,498.3 1377.6,500 1376.6,503.1 1375.6,506.3 1374.1,509.2 1374.5,512.5 1376.6,514.2 1377.6,516.7 1380.1,515.6 1382.9,515.6 1386,512.5 1387,515.1 1388.1,517.7 1390.4,519 1392.2,520.9 1394.6,522.3 1395.4,525 1398.5,524" fill="none" stroke="#161b22" stroke-width="0.9" stroke-linejoin="round"/>
<path d="M1344.9,461.4 1347.4,460.2 1350.2,460.3 1353.1,460.7 1355.4,462.4 1358.5,461.7 1360.6,459.3 1363.9,458.1 1366.8,456.2 1370.2,456 1373.1,454.1 1376.1,452.8 1379.4,453 1383.5,451 1385.1,448 1385.6,444.7 1388.7,441.6 1391.3,440.8 1394,441.6 1395.9,444.3 1398,447 1398.7,450.1 1400,453 1402,455.5 1403.4,458.4 1405.9,461.8 1409.2,463.4 1411.8,462.4 1413.4,460.1 1416.7,457.6 1418.6,455.8 1420.4,454 1422,452 1424.9,452.1 1427.1,449.8 1430,450 1432.3,451.6 1434.9,451.3 1437.5,451.3 1440,452 1442.2,453.8 1445.3,453.9 1447.1,456.6 1450.1,456.8" fill="none" stroke="#161b22" stroke-width="0.9" stroke-linejoin="round"/>
<path d="M1231.3,493.7 1233.9,494.4 1236.5,494.8 1238.9,494.5 1241.4,495.4 1243.8,494.8 1245.5,496.8 1246.9,498.9 1249.9,499.9 1252.1,502.1 1256.3,503.1 1258,505.6 1260.5,507.3 1264,508 1266.7,510.4 1270.2,509.5 1273,507.3 1275.9,508.9 1278.2,511.4 1280.9,510.7 1283.4,509.4 1286.3,507.4 1287.6,504.1 1290.8,503.3 1293.8,502.1 1296.6,500.8 1299.1,498.9 1302.2,498.9 1304.1,501.3 1305.3,504.1 1308.4,507.3 1310,509.7 1309.5,512.5 1312.3,512 1314.7,513.5 1317.7,514.4 1319.9,516.7 1322.4,518.5 1325.1,519.8 1327.3,521.2 1329.3,522.9 1331.4,525 1333.5,527.1 1335.6,530 1336.4,532.7 1339.3,533.9 1340.1,536.5 1343.1,538.1 1345.3,540.7 1347.2,542.5 1349.5,543.8 1351.5,546 1351.6,549 1353.2,551.4 1352.6,554.2 1351.3,557.5 1349.5,560.5 1349.8,563.8 1348.4,566.7 1349.7,569.2 1350.5,571.9 1352.1,574.3 1352.6,577.2 1351.4,579.7 1350.5,582.4 1347.8,583.8 1345.3,585.5 1343,587.6 1340.1,588.6 1337.4,589.4 1334.9,590.7 1334.3,588.1 1333.8,585.5 1331.8,582.4 1329.1,583.4 1326.1,581.8 1323.4,583 1321,583.6 1318.6,583.9 1316.1,584.1 1313.7,583 1311.2,582.5 1308.8,583.4 1306,583.9 1303.6,585.5 1301.5,589.7 1302.6,593.8 1301.2,596.6 1299.4,599.1 1298.4,603.2 1300.4,605 1301.5,607.4 1304.7,608.4 1306,605.6 1308.8,604.3 1313,602.2 1317.2,602.2 1320.3,605.3 1323.4,608.4 1327.6,608.4 1331.8,609.5 1333.1,611.8 1334.9,613.7 1337,617.8 1337.9,620.5 1339.1,623 1340.9,625.5 1342.2,628.3 1344.3,632.4 1345.3,628.3 1348.4,627.2 1351.1,627.5 1353.7,627.2 1356.8,630.3 1359.9,633.5 1360.6,636.6 1361,639.7 1359,642.5 1358.9,646 1358.6,648.5 1359.9,651 1358.6,653.6 1360.7,655.9 1359.9,658.5 1360.4,661.7 1361,664.8 1362.2,667.8 1363,671 1364.6,674 1365.1,677.3 1365.6,680.6 1364.1,683.5 1364.6,686.8 1366.2,689.8 1368.2,692 1368.3,695 1366.7,694 1367.6,696.6 1368.8,699.2" fill="none" stroke="#161b22" stroke-width="0.9" stroke-linejoin="round"/>
<path d="M1277.5,600.1 1276,603.1 1276.5,606.4 1277.8,609.4 1277.5,612.6 1277.1,616 1275.5,618.9 1273.7,620.8 1272.3,623 1272.8,626.2 1273.4,629.3 1273.6,632.5 1274.4,635.6 1273.2,638.6 1273.4,641.8 1273,645.2 1271.3,648.1 1268.9,650 1266.1,651.2 1261.9,650.2 1259.8,646 1258.3,643 1257.7,639.7 1256.2,636.8 1256.7,633.5 1253.6,632.4 1251.8,634.7 1251.5,637.6 1250.5,640.3 1250.3,643.1 1250.4,646 1250.4,649.4 1248.3,652.2 1246.6,655.1 1246.3,658.5 1245.2,661.6 1245.2,664.8" fill="none" stroke="#161b22" stroke-width="0.9" stroke-linejoin="round"/>
<path d="M1352.6,554.2 1354.6,552.1 1356.8,550.1 1358.8,547.7 1359.9,544.8 1360.3,542.2 1361,539.6 1363.5,541.3 1365.1,543.8 1366.5,540.7 1369.3,538.6 1371,536.1 1373.5,534.4 1376.4,532.9 1379.7,533.4 1382.9,533.5 1386,534.4 1390.2,532.3 1392.7,530 1394.3,527.1 1396.7,525.9 1398.5,524 1402,523.1 1404.8,520.9 1407.3,521.9 1410,521.9 1412,523.7 1413.1,526.1 1415.1,527.7 1417.3,529.2 1421.4,531.3 1423.1,533.3 1424.6,535.5 1427.4,535 1429.8,533.4 1432.4,532.9 1435,532.3 1435.6,529 1437.1,526.1 1440,525 1441.7,527.1" fill="none" stroke="#161b22" stroke-width="0.9" stroke-linejoin="round"/>
<path d="M1368.8,699.2 1371.1,697.9 1373,696.1 1376.2,694.8 1378.2,691.9 1379.9,689.4 1382.4,687.8 1384.7,689.6 1387.6,689.9 1390.6,689.9 1392.8,691.9 1395.9,694 1397.7,692 1400.1,690.9 1400.6,687.6 1402.2,684.7 1405.3,686.7 1405.8,690 1407.4,693 1408.1,696.1 1410.5,698.2 1409.5,700.3 1412.4,699.2 1414.7,697.2 1417.1,695.3 1419.9,694 1421.7,691.7 1422,688.8 1425.1,690.9 1427.2,693 1430.4,693.1 1433.5,694 1436.6,690.9 1439.3,690.8 1441.8,691.9 1444.5,690.5 1446,687.8 1446.8,684.7 1447,681.5 1451.2,679.4 1453.1,677 1454.3,674.2 1456.3,672.7 1458.5,671.5 1459.5,669 1459.8,666.6 1461,664.2 1460.6,661.7 1462.1,659.3 1462.7,656.5 1464.9,654.3 1465.8,651.3 1465.2,648.7 1464.8,646.1 1463,644.1 1460.6,642.9 1461.3,639.8 1461.6,636.7 1461.7,633.5 1462.7,630.4 1461,627.5 1460.6,624.2 1458.5,620" fill="none" stroke="#161b22" stroke-width="0.9" stroke-linejoin="round"/>
<path d="M1368.8,699.2 1371.3,700 1374,700.3 1377.2,703.4 1377.6,706.7 1376.1,709.7 1374.2,712.5 1374,715.9 1374.8,719 1374,722.2 1373.4,725.8 1370.9,728.4 1375.1,728.4 1377.5,727.1 1380.3,727.4 1380.5,730.8 1382.4,733.7 1382.2,736.9 1381.3,739.9 1383.1,742.8 1383.4,746.2 1382.7,748.9 1380.3,750.3 1378.8,752.7 1376.1,753.5 1373,750.3 1370.6,751.6 1368.8,753.5 1368,756 1367.8,758.7 1367.7,761.2 1368,763.6 1368.8,766 1370.3,768.4 1369.9,771.2 1372.4,772.9 1375.1,774.3 1377.8,775.1 1380.3,776.4 1380.7,779.8 1382.4,782.7 1382.8,786 1384.5,788.9 1385.3,791.9 1387.6,794.1 1389.3,798.3 1388.2,801.5 1385.5,803.5 1382.8,805 1381.3,807.7 1379.4,810 1379.2,812.9 1378.8,816.6 1380.3,820 1381.6,823" fill="none" stroke="#161b22" stroke-width="0.9" stroke-linejoin="round"/>
<path d="M1248.8,227.8 1250.3,230.2 1250.9,233 1253.4,233.4 1255.7,234.1 1258.1,234.8 1260.3,236.1 1262.9,236.8 1265.5,237 1268.1,237.1 1270.7,237.2 1272.5,239.5 1274.9,241.3 1276.3,244.5 1278,247.6 1278.8,250.7 1279.1,253.8 1278.5,257.1 1277,260.1 1275.2,262.5 1272.8,264.3 1271.5,267.3 1270.7,270.5 1271.1,273.6 1270.7,276.8 1269.9,280 1268.6,283 1265.5,286.2 1262.9,286.3 1260.3,286.2 1258,288.2 1255.1,289.3 1253.9,291.6 1252.5,293.6 1250.9,295.6 1248,296.4 1245.4,297.8 1242.6,298.7 1239.5,300 1236.3,300.8 1233.4,301.9 1231.1,303.9 1231.1,308.1 1233.2,309.7 1235.3,311.2 1236.3,315.4 1239.3,316.9 1242.6,317.5 1242.1,319.9 1242.4,322.5 1241.5,324.8 1242.6,327.9 1243.6,331 1245.4,333.1 1246.8,335.4 1248.8,337.3 1250.7,339.2 1252.1,341.6 1254,343.5 1254.7,345.9 1255.7,348.3 1256.1,350.8 1254.3,352.7 1253.7,355.3 1251.9,357.1 1249.9,360 1250.1,358.2 1250.2,360.9 1251.1,363.4 1249.2,365.3 1246.9,366.5 1244.5,367.4 1242.1,367.5 1239.6,367.5 1239.8,370.2 1240.7,372.8 1243.5,372.5 1245.7,370.6 1248.5,370.4 1251.1,369.6 1251.4,372 1251.4,374.5 1252.1,376.9 1248,379 1245.6,381.4 1242.8,383.2 1240.7,384.8 1238.6,386.3 1236.6,389 1234.4,391.5 1232.5,393.4 1231.3,395.7" fill="none" stroke="#1b212a" stroke-width="2.6" stroke-linejoin="round"/>
<path d="M1248.8,227.8 1250.3,230.2 1250.9,233 1253.4,233.4 1255.7,234.1 1258.1,234.8 1260.3,236.1 1262.9,236.8 1265.5,237 1268.1,237.1 1270.7,237.2 1272.5,239.5 1274.9,241.3 1276.3,244.5 1278,247.6 1278.8,250.7 1279.1,253.8 1278.5,257.1 1277,260.1 1275.2,262.5 1272.8,264.3 1271.5,267.3 1270.7,270.5 1271.1,273.6 1270.7,276.8 1269.9,280 1268.6,283 1265.5,286.2 1262.9,286.3 1260.3,286.2 1258,288.2 1255.1,289.3 1253.9,291.6 1252.5,293.6 1250.9,295.6 1248,296.4 1245.4,297.8 1242.6,298.7 1239.5,300 1236.3,300.8 1233.4,301.9 1231.1,303.9 1231.1,308.1 1233.2,309.7 1235.3,311.2 1236.3,315.4 1239.3,316.9 1242.6,317.5 1242.1,319.9 1242.4,322.5 1241.5,324.8 1242.6,327.9 1243.6,331 1245.4,333.1 1246.8,335.4 1248.8,337.3 1250.7,339.2 1252.1,341.6 1254,343.5 1254.7,345.9 1255.7,348.3 1256.1,350.8 1254.3,352.7 1253.7,355.3 1251.9,357.1 1249.9,360 1250.1,358.2 1250.2,360.9 1251.1,363.4 1249.2,365.3 1246.9,366.5 1244.5,367.4 1242.1,367.5 1239.6,367.5 1239.8,370.2 1240.7,372.8 1243.5,372.5 1245.7,370.6 1248.5,370.4 1251.1,369.6 1251.4,372 1251.4,374.5 1252.1,376.9 1248,379 1245.6,381.4 1242.8,383.2 1240.7,384.8 1238.6,386.3 1236.6,389 1234.4,391.5 1232.5,393.4 1231.3,395.7" fill="none" stroke="#323c48" stroke-width="1" stroke-linejoin="round"/>
<circle cx="1482" cy="253" r="6.8" fill="#dfab18"/>
<text x="1482" y="284.5" fill="#dbad1e">岳阳五尖山</text>
<circle cx="1316" cy="293" r="6.8" fill="#a4a4a4"/>
<text x="1316" y="324.5" fill="#a6a6a6">常德太阳山</text>
<circle cx="1154" cy="322" r="6.8" fill="#a4a4a4"/>
<text x="1154" y="353.5" fill="#a6a6a6">湘西花果山</text>
<circle cx="1380" cy="375" r="6.8" fill="#dfab18"/>
<text x="1380" y="406.5" fill="#dbad1e">益阳联通塔</text>
<circle cx="1438" cy="423" r="6.8" fill="#dfab18"/>
<text x="1438" y="454.5" fill="#dbad1e">长沙岳麓山</text>
<circle cx="1371" cy="471" r="6.8" fill="#dfab18"/>
<text x="1371" y="502.5" fill="#dbad1e">湘乡褒忠山</text>
<circle cx="1493" cy="495" r="6.8" fill="#d90f0f"/>
<text x="1493" y="526.5" fill="#b8161b" style="font-weight:400">醴陵珊田基站</text>
<circle cx="1292" cy="549" r="6.8" fill="#dfab18"/>
<text x="1292" y="580.5" fill="#dbad1e">邵阳大坡岭</text>
<circle cx="1331" cy="624" r="6.8" fill="#a4a4a4"/>
<text x="1331" y="655.5" fill="#a6a6a6">永州大华山</text>
<circle cx="1449" cy="738" r="6.8" fill="#a4a4a4"/>
<text x="1449" y="769.5" fill="#a6a6a6">郴州苏仙岭</text>
<circle cx="1438" cy="793" r="6.8" fill="#a4a4a4"/>
<text x="1438" y="824.5" fill="#a6a6a6">宜章清水基站</text>
</svg>
<div class="sh"></div><div style="left:0;top:0;width:1239px;height:1px;background:rgba(30,110,130,.45)"></div>
<div class="mt">湖南站点监控图</div>
<div class="rb" style="top:112.1px;background:#2ea6d6"><b></b><b style="left:3.5px;top:3.5px;width:6px;height:6px;background:#000"></b></div>
<div class="rl" style="top:106.3px">全部站点</div>
<div class="rb" style="top:138.0px;background:#7b6a2c"><b></b></div>
<div class="rl" style="top:132.2px">联通<span style="position:static;letter-spacing:1.3px">1kW</span></div>
<div class="rb" style="top:163.0px;background:#4c8a3c"><b></b></div>
<div class="rl" style="top:157.2px">广电<span style="position:static;letter-spacing:1.3px">3kW</span></div>
<div class="rb" style="top:188.8px;background:#8a1f1f"><b></b></div>
<div class="rl" style="top:183.0px">广电<span style="position:static;letter-spacing:1.15px">10kW</span></div>
<div class="rb" style="top:215.2px;background:#8a1f1f"><b></b></div>
<div class="rl" style="top:209.4px">测试站点</div>
<div class="a" style="left:31px;top:240px;width:13px;height:13px;background:#fff;border:1px solid #888"></div>
<svg style="left:31px;top:240px" width="13" height="13" viewBox="0 0 13 13"><path d="M2.6 6.4l2.6 3 5-6.6" fill="none" stroke="#000" stroke-width="2"/></svg>
<div class="rl" style="left:50px;top:234.5px">显示站点名称</div>
<div class="ld" style="top:357px;background:#0aa84f"></div>
<div class="lg" style="top:352px">正常</div>
<div class="ld" style="top:383px;background:#fe0000"></div>
<div class="lg" style="top:378px">异常</div>
<div class="ld" style="top:409px;background:#f2b50c"></div>
<div class="lg" style="top:404px">警告</div>
<div class="ld" style="top:435px;background:#aaaaaa"></div>
<div class="lg" style="top:430px">掉线</div>
</div>
</body>
</html>
